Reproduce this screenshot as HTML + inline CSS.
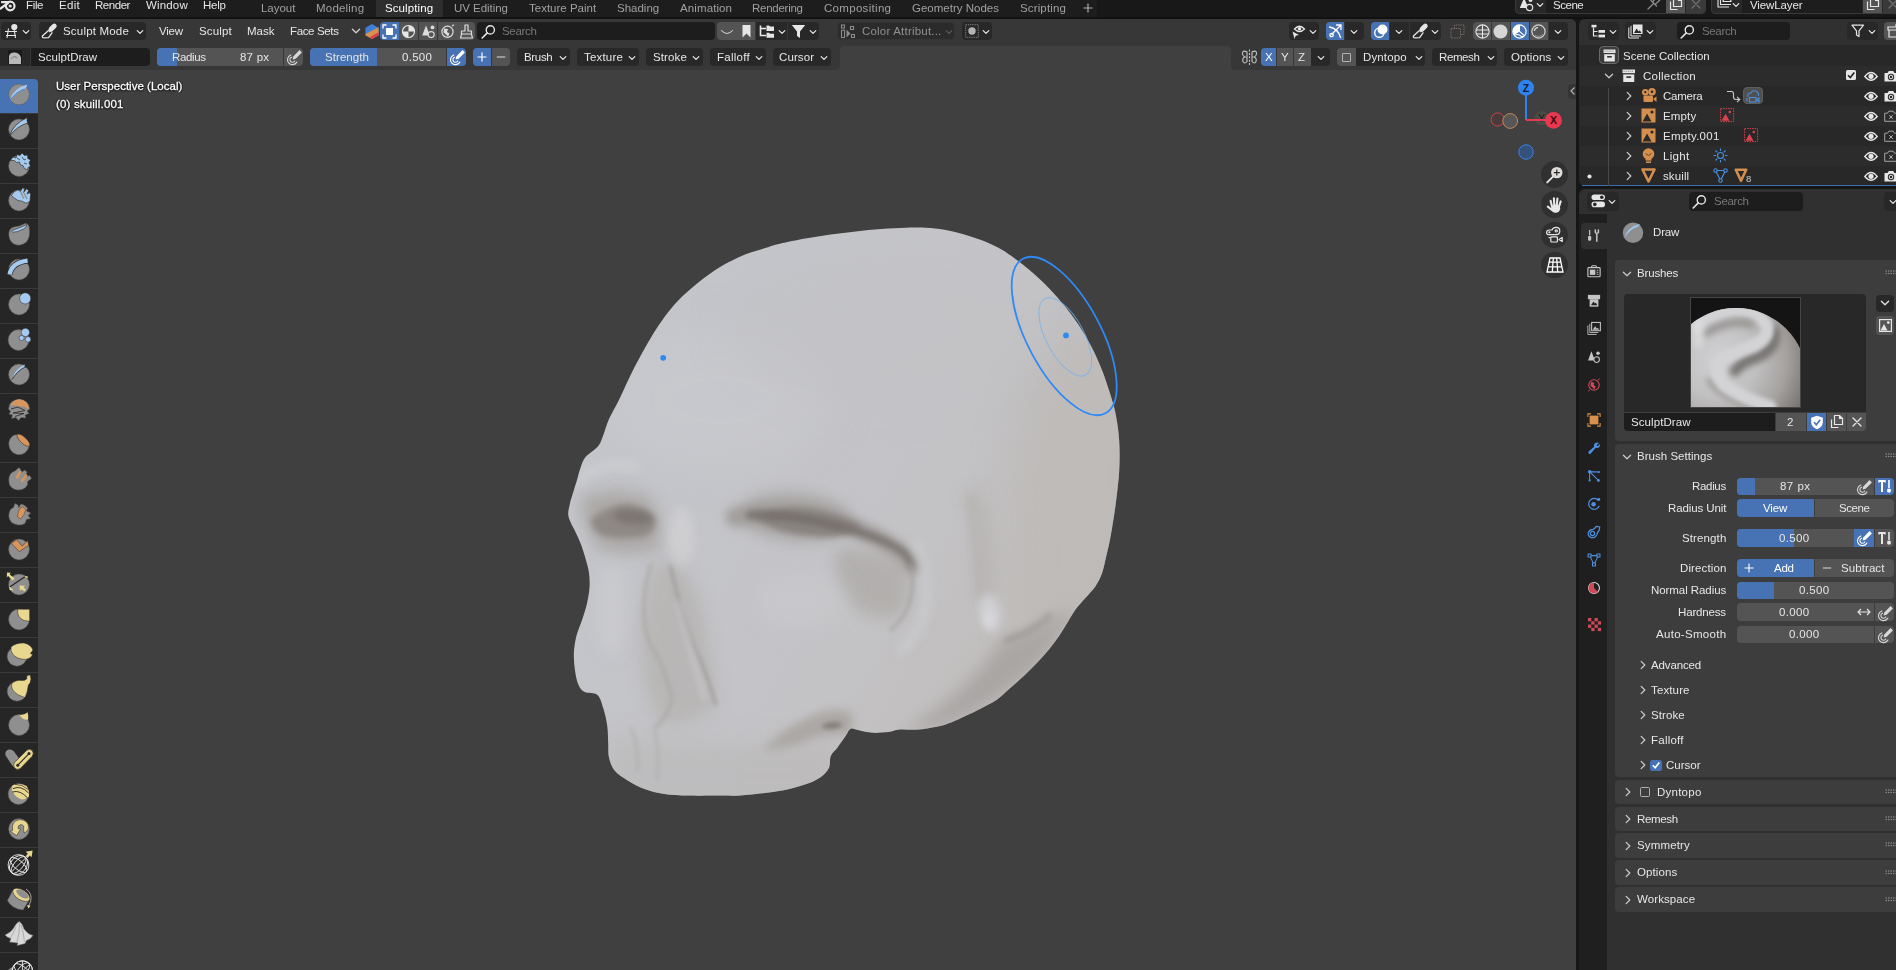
<!DOCTYPE html>
<html lang="en"><head><meta charset="utf-8"><title>Blender</title>
<style>
html,body{margin:0;padding:0}
body{width:1896px;height:970px;overflow:hidden;position:relative;background:#161616;
 font-family:"Liberation Sans",sans-serif;font-size:11.5px;color:#e6e6e6;-webkit-font-smoothing:antialiased}
div,span,svg{position:absolute;box-sizing:border-box}
.t{white-space:pre;line-height:16px;height:16px;will-change:transform}
svg{overflow:visible}
</style></head>
<body>
<div style="left:0.0px;top:19.0px;width:1576.0px;height:951.0px;background:#404040;border-radius:0 6px 0 0;"></div>
<svg style="left:540px;top:200px" width="620" height="620" viewBox="540 200 620 620"><defs><clipPath id="skc"><path d="M568.2 514.0C568.1 511.0 569.0 507.8 569.8 504.2C570.6 500.6 571.9 496.7 573.1 492.6C574.3 488.5 576.0 483.5 577.2 479.4C578.4 475.3 579.1 471.6 580.5 467.9C581.9 464.2 582.6 460.7 585.5 457.1C588.4 453.5 595.0 449.8 597.9 446.4C600.8 443.0 601.0 440.9 602.8 436.5C604.6 432.1 606.1 425.8 608.6 420.0C611.1 414.2 614.7 408.7 618.0 402.0C621.3 395.3 625.2 386.4 628.3 380.0C631.4 373.6 633.5 369.4 636.5 363.6C639.5 357.8 643.1 351.2 646.4 345.4C649.7 339.6 652.7 334.4 656.3 328.9C659.9 323.4 663.8 317.6 667.9 312.4C672.0 307.2 676.4 302.3 681.1 297.6C685.8 292.9 690.7 288.7 695.9 284.4C701.1 280.1 706.9 275.7 712.4 272.0C717.9 268.3 723.1 265.1 728.9 262.1C734.7 259.1 741.0 256.1 747.1 253.8C753.2 251.5 759.7 249.8 765.2 248.1C770.7 246.4 773.3 245.4 780.0 243.8C786.7 242.2 796.9 240.2 805.3 238.6C813.7 237.0 822.2 235.6 830.6 234.4C839.0 233.2 847.5 232.3 855.9 231.4C864.3 230.5 872.8 229.7 881.3 229.1C889.8 228.5 899.2 228.0 906.6 227.8C914.0 227.6 919.3 227.5 925.6 227.8C931.9 228.1 938.3 228.6 944.6 229.7C950.9 230.8 957.2 232.4 963.5 234.2C969.8 236.0 976.2 238.0 982.5 240.5C988.8 243.0 995.8 246.2 1001.5 249.4C1007.2 252.6 1011.2 255.9 1016.5 259.8C1021.8 263.7 1027.5 268.2 1033.0 273.0C1038.5 277.8 1044.0 282.9 1049.5 288.7C1055.0 294.5 1061.0 301.5 1066.0 307.7C1071.0 313.9 1075.1 319.5 1079.2 325.8C1083.3 332.1 1087.2 338.7 1090.8 345.6C1094.4 352.5 1098.0 360.5 1100.7 367.1C1103.5 373.7 1105.1 378.6 1107.3 385.2C1109.5 391.8 1112.2 400.2 1113.9 406.5C1115.6 412.8 1116.3 417.5 1117.2 423.0C1118.1 428.5 1118.7 434.0 1119.1 439.5C1119.5 445.0 1119.6 450.5 1119.6 456.0C1119.6 461.5 1119.4 467.0 1119.1 472.5C1118.8 478.0 1118.1 483.5 1117.5 489.0C1116.9 494.5 1116.2 500.0 1115.5 505.5C1114.8 511.0 1113.9 516.5 1113.0 522.0C1112.1 527.5 1111.3 532.8 1110.2 538.5C1109.1 544.2 1107.6 550.8 1106.2 556.5C1104.8 562.2 1103.9 568.0 1102.1 573.0C1100.3 578.0 1098.2 582.1 1095.5 586.2C1092.8 590.3 1088.9 593.9 1085.6 597.8C1082.3 601.6 1078.7 605.2 1075.7 609.3C1072.7 613.4 1070.2 618.1 1067.5 622.5C1064.8 626.9 1062.2 631.3 1059.2 635.7C1056.2 640.1 1052.9 644.5 1049.3 648.9C1045.7 653.3 1041.9 657.7 1037.8 662.1C1033.7 666.5 1029.3 670.9 1024.6 675.3C1019.9 679.7 1014.4 684.4 1009.7 688.5C1005.0 692.6 1001.5 696.6 996.5 700.0C991.5 703.4 984.6 706.6 980.0 709.0C975.4 711.4 974.4 711.9 968.7 714.5C963.0 717.1 953.9 721.9 945.6 724.4C937.4 726.9 926.8 728.5 919.2 729.4C911.6 730.2 905.1 729.1 900.0 729.5C894.9 729.9 893.2 731.5 888.5 732.0C883.8 732.5 877.0 733.1 872.0 732.8C867.0 732.5 862.4 731.0 858.8 730.3C855.2 729.6 852.8 727.7 850.6 728.7C848.4 729.7 847.8 732.9 845.6 736.1C843.4 739.3 839.9 744.4 837.4 747.7C834.9 751.0 832.2 752.6 830.8 755.9C829.4 759.2 830.5 764.2 829.1 767.5C827.7 770.8 825.8 773.1 822.5 775.7C819.2 778.3 814.8 780.9 809.3 783.1C803.8 785.3 796.9 787.2 789.5 788.9C782.1 790.5 773.0 791.9 764.8 793.0C756.5 794.1 747.1 795.1 740.0 795.5C732.9 795.9 730.5 795.5 722.0 795.5C713.5 795.5 698.6 795.8 689.0 795.5C679.4 795.2 671.7 795.0 664.3 793.9C656.9 792.8 650.5 791.1 644.5 788.9C638.5 786.7 633.0 783.7 628.0 780.7C623.0 777.7 618.0 774.6 614.8 770.8C611.6 766.9 610.1 762.3 609.0 757.6C607.9 752.9 608.5 747.9 608.2 742.7C607.9 737.5 608.1 732.0 607.3 726.2C606.5 720.4 604.9 713.2 603.2 708.0C601.6 702.8 600.5 697.5 597.4 694.9C594.3 692.2 587.9 693.9 584.7 692.1C581.5 690.3 579.8 687.8 578.1 683.9C576.5 680.0 575.5 674.2 574.8 669.0C574.1 663.8 573.6 658.0 573.9 652.5C574.2 647.0 575.0 641.5 576.4 636.0C577.8 630.5 580.4 625.0 582.2 619.5C584.0 614.0 585.9 608.5 587.1 603.0C588.3 597.5 589.3 591.7 589.6 586.5C589.9 581.3 589.5 576.4 588.8 571.8C588.1 567.1 586.7 563.0 585.5 558.6C584.3 554.2 582.9 549.5 581.4 545.4C579.9 541.3 578.2 537.8 576.4 533.9C574.6 530.0 572.0 525.6 570.6 522.3C569.2 519.0 568.3 517.0 568.2 514.0Z"/></clipPath><filter id="b2" filterUnits="userSpaceOnUse" x="480" y="140" width="740" height="740"><feGaussianBlur stdDeviation="2"/></filter><filter id="b3" filterUnits="userSpaceOnUse" x="480" y="140" width="740" height="740"><feGaussianBlur stdDeviation="3"/></filter><filter id="b5" filterUnits="userSpaceOnUse" x="480" y="140" width="740" height="740"><feGaussianBlur stdDeviation="5"/></filter><filter id="b8" filterUnits="userSpaceOnUse" x="480" y="140" width="740" height="740"><feGaussianBlur stdDeviation="8"/></filter><filter id="b12" filterUnits="userSpaceOnUse" x="480" y="140" width="740" height="740"><feGaussianBlur stdDeviation="12"/></filter><filter id="b20" filterUnits="userSpaceOnUse" x="480" y="140" width="740" height="740"><feGaussianBlur stdDeviation="20"/></filter><filter id="b1" filterUnits="userSpaceOnUse" x="480" y="140" width="740" height="740"><feGaussianBlur stdDeviation="1.2"/></filter><linearGradient id="skg" gradientUnits="userSpaceOnUse" x1="600" y1="300" x2="1120" y2="600"><stop offset="0" stop-color="#c4c6cb"/><stop offset="0.55" stop-color="#c4c4c8"/><stop offset="1" stop-color="#c0bcb9"/></linearGradient></defs><path d="M568.2 514.0C568.1 511.0 569.0 507.8 569.8 504.2C570.6 500.6 571.9 496.7 573.1 492.6C574.3 488.5 576.0 483.5 577.2 479.4C578.4 475.3 579.1 471.6 580.5 467.9C581.9 464.2 582.6 460.7 585.5 457.1C588.4 453.5 595.0 449.8 597.9 446.4C600.8 443.0 601.0 440.9 602.8 436.5C604.6 432.1 606.1 425.8 608.6 420.0C611.1 414.2 614.7 408.7 618.0 402.0C621.3 395.3 625.2 386.4 628.3 380.0C631.4 373.6 633.5 369.4 636.5 363.6C639.5 357.8 643.1 351.2 646.4 345.4C649.7 339.6 652.7 334.4 656.3 328.9C659.9 323.4 663.8 317.6 667.9 312.4C672.0 307.2 676.4 302.3 681.1 297.6C685.8 292.9 690.7 288.7 695.9 284.4C701.1 280.1 706.9 275.7 712.4 272.0C717.9 268.3 723.1 265.1 728.9 262.1C734.7 259.1 741.0 256.1 747.1 253.8C753.2 251.5 759.7 249.8 765.2 248.1C770.7 246.4 773.3 245.4 780.0 243.8C786.7 242.2 796.9 240.2 805.3 238.6C813.7 237.0 822.2 235.6 830.6 234.4C839.0 233.2 847.5 232.3 855.9 231.4C864.3 230.5 872.8 229.7 881.3 229.1C889.8 228.5 899.2 228.0 906.6 227.8C914.0 227.6 919.3 227.5 925.6 227.8C931.9 228.1 938.3 228.6 944.6 229.7C950.9 230.8 957.2 232.4 963.5 234.2C969.8 236.0 976.2 238.0 982.5 240.5C988.8 243.0 995.8 246.2 1001.5 249.4C1007.2 252.6 1011.2 255.9 1016.5 259.8C1021.8 263.7 1027.5 268.2 1033.0 273.0C1038.5 277.8 1044.0 282.9 1049.5 288.7C1055.0 294.5 1061.0 301.5 1066.0 307.7C1071.0 313.9 1075.1 319.5 1079.2 325.8C1083.3 332.1 1087.2 338.7 1090.8 345.6C1094.4 352.5 1098.0 360.5 1100.7 367.1C1103.5 373.7 1105.1 378.6 1107.3 385.2C1109.5 391.8 1112.2 400.2 1113.9 406.5C1115.6 412.8 1116.3 417.5 1117.2 423.0C1118.1 428.5 1118.7 434.0 1119.1 439.5C1119.5 445.0 1119.6 450.5 1119.6 456.0C1119.6 461.5 1119.4 467.0 1119.1 472.5C1118.8 478.0 1118.1 483.5 1117.5 489.0C1116.9 494.5 1116.2 500.0 1115.5 505.5C1114.8 511.0 1113.9 516.5 1113.0 522.0C1112.1 527.5 1111.3 532.8 1110.2 538.5C1109.1 544.2 1107.6 550.8 1106.2 556.5C1104.8 562.2 1103.9 568.0 1102.1 573.0C1100.3 578.0 1098.2 582.1 1095.5 586.2C1092.8 590.3 1088.9 593.9 1085.6 597.8C1082.3 601.6 1078.7 605.2 1075.7 609.3C1072.7 613.4 1070.2 618.1 1067.5 622.5C1064.8 626.9 1062.2 631.3 1059.2 635.7C1056.2 640.1 1052.9 644.5 1049.3 648.9C1045.7 653.3 1041.9 657.7 1037.8 662.1C1033.7 666.5 1029.3 670.9 1024.6 675.3C1019.9 679.7 1014.4 684.4 1009.7 688.5C1005.0 692.6 1001.5 696.6 996.5 700.0C991.5 703.4 984.6 706.6 980.0 709.0C975.4 711.4 974.4 711.9 968.7 714.5C963.0 717.1 953.9 721.9 945.6 724.4C937.4 726.9 926.8 728.5 919.2 729.4C911.6 730.2 905.1 729.1 900.0 729.5C894.9 729.9 893.2 731.5 888.5 732.0C883.8 732.5 877.0 733.1 872.0 732.8C867.0 732.5 862.4 731.0 858.8 730.3C855.2 729.6 852.8 727.7 850.6 728.7C848.4 729.7 847.8 732.9 845.6 736.1C843.4 739.3 839.9 744.4 837.4 747.7C834.9 751.0 832.2 752.6 830.8 755.9C829.4 759.2 830.5 764.2 829.1 767.5C827.7 770.8 825.8 773.1 822.5 775.7C819.2 778.3 814.8 780.9 809.3 783.1C803.8 785.3 796.9 787.2 789.5 788.9C782.1 790.5 773.0 791.9 764.8 793.0C756.5 794.1 747.1 795.1 740.0 795.5C732.9 795.9 730.5 795.5 722.0 795.5C713.5 795.5 698.6 795.8 689.0 795.5C679.4 795.2 671.7 795.0 664.3 793.9C656.9 792.8 650.5 791.1 644.5 788.9C638.5 786.7 633.0 783.7 628.0 780.7C623.0 777.7 618.0 774.6 614.8 770.8C611.6 766.9 610.1 762.3 609.0 757.6C607.9 752.9 608.5 747.9 608.2 742.7C607.9 737.5 608.1 732.0 607.3 726.2C606.5 720.4 604.9 713.2 603.2 708.0C601.6 702.8 600.5 697.5 597.4 694.9C594.3 692.2 587.9 693.9 584.7 692.1C581.5 690.3 579.8 687.8 578.1 683.9C576.5 680.0 575.5 674.2 574.8 669.0C574.1 663.8 573.6 658.0 573.9 652.5C574.2 647.0 575.0 641.5 576.4 636.0C577.8 630.5 580.4 625.0 582.2 619.5C584.0 614.0 585.9 608.5 587.1 603.0C588.3 597.5 589.3 591.7 589.6 586.5C589.9 581.3 589.5 576.4 588.8 571.8C588.1 567.1 586.7 563.0 585.5 558.6C584.3 554.2 582.9 549.5 581.4 545.4C579.9 541.3 578.2 537.8 576.4 533.9C574.6 530.0 572.0 525.6 570.6 522.3C569.2 519.0 568.3 517.0 568.2 514.0Z" fill="url(#skg)"/><g clip-path="url(#skc)"><ellipse cx="1085" cy="520" rx="75" ry="190" fill="#bcb8b4" opacity="0.55" filter="url(#b20)"/><ellipse cx="720" cy="400" rx="110" ry="70" fill="#cacbcf" opacity="0.55" filter="url(#b20)"/><ellipse cx="880" cy="330" rx="150" ry="70" fill="#c2c2c5" opacity="0.5" filter="url(#b20)"/><path d="M605 735 L835 745 L835 810 L605 810 Z" fill="#b9b7b6" opacity="0.55" filter="url(#b12)"/><path d="M576 486 Q598 456 640 468" fill="none" stroke="#d0d0d4" stroke-width="9" opacity="0.7" filter="url(#b5)"/><path d="M580 498 Q610 484 648 496 Q664 516 660 548 Q630 558 598 548 Q584 530 580 498Z" fill="#aaa7a5" opacity="0.95" filter="url(#b8)"/><path d="M591 519 Q606 506 626 504 Q649 506 656 520 Q656 531 646 536 Q620 541 601 535 Q591 529 591 519Z" fill="#8f8985" filter="url(#b3)"/><ellipse cx="633" cy="517" rx="19" ry="7" transform="rotate(6 633 517)" fill="#79736e" opacity="0.85" filter="url(#b3)"/><ellipse cx="681" cy="538" rx="13" ry="30" fill="#d0d0d3" opacity="0.8" filter="url(#b5)"/><ellipse cx="796" cy="517" rx="56" ry="24" transform="rotate(4 796 517)" fill="#a9a6a4" filter="url(#b8)"/><path d="M735 517 Q775 510 805 514 Q836 520 868 534 Q896 547 911 566" fill="none" stroke="#a29f9d" stroke-width="20" stroke-linecap="round" filter="url(#b5)"/><path d="M752 516 Q775 506 806 508 Q836 512 862 526 Q845 540 812 536 Q775 534 752 516Z" fill="#88837f" filter="url(#b3)"/><path d="M750 515 Q780 514 807 519 Q838 525 864 533.5 Q890 543 902 552 Q909 558 911 566" fill="none" stroke="#79736f" stroke-width="8" stroke-linecap="round" filter="url(#b3)"/><path d="M770 516 Q800 516 838 527" fill="none" stroke="#77716d" stroke-width="5" stroke-linecap="round" opacity="0.8" filter="url(#b2)"/><path d="M836 548 Q880 546 906 566 Q914 592 903 612 Q880 626 852 606 Q830 580 836 548Z" fill="#b1aeac" opacity="0.9" filter="url(#b8)"/><path d="M910 564 Q916 584 908 607 Q901 622 890 631" fill="none" stroke="#a5a2a0" stroke-width="2.5" filter="url(#b2)"/><path d="M916 540 Q932 580 924 615 Q915 640 898 652" fill="none" stroke="#cdcdd0" stroke-width="9" opacity="0.7" filter="url(#b5)"/><ellipse cx="800" cy="600" rx="45" ry="25" fill="#cbcbce" opacity="0.6" filter="url(#b12)"/><path d="M656 560 Q688 562 700 600 Q714 656 717 706 Q692 726 662 724 Q640 692 641 642 Q640 600 656 560Z" fill="#b4b1ae" opacity="0.7" filter="url(#b8)"/><path d="M670 565 Q678 602 694 647 Q708 676 716 706" fill="none" stroke="#9a9693" stroke-width="2.4" filter="url(#b2)"/><path d="M651 563 Q638 610 649 642 Q666 668 672 700 Q668 716 655 728" fill="none" stroke="#aaa7a4" stroke-width="2.6" filter="url(#b2)"/><path d="M678 600 Q690 650 705 700" fill="none" stroke="#cfcfd2" stroke-width="5" opacity="0.6" filter="url(#b3)"/><ellipse cx="612" cy="610" rx="16" ry="45" fill="#cdcdd0" opacity="0.6" filter="url(#b8)"/><path d="M763 750 Q788 724 820 713 Q840 706 853 715 L851 735 Q826 732 806 741 Q786 750 763 750Z" fill="#aba7a4" filter="url(#b5)"/><ellipse cx="832" cy="725.5" rx="10" ry="3.6" transform="rotate(-6 832 725.5)" fill="#878079" filter="url(#b2)"/><path d="M631 728 Q640 750 637 772 M654 728 Q660 755 657 780" fill="none" stroke="#b0adab" stroke-width="2" filter="url(#b2)"/><path d="M972 492 Q990 540 984 600" fill="none" stroke="#b5b2af" stroke-width="16" opacity="0.8" filter="url(#b8)"/><path d="M969 496 Q976 550 980 600" fill="none" stroke="#adaaa7" stroke-width="2.5" opacity="0.7" filter="url(#b3)"/><ellipse cx="990" cy="613" rx="10" ry="19" transform="rotate(-10 990 613)" fill="#d4d4d9" opacity="0.85" filter="url(#b5)"/><ellipse cx="989" cy="620" rx="5" ry="8" fill="#dadadf" opacity="0.8" filter="url(#b3)"/><path d="M1003 640 Q1030 636 1056 616 L1075 612 L1036 668 L992 702 L946 726 L900 733 Q960 700 1003 640Z" fill="#a9a6a4" filter="url(#b8)"/><path d="M1004 641 Q1034 632 1051 614" fill="none" stroke="#96928f" stroke-width="4" filter="url(#b3)"/></g><g fill="none" transform="rotate(61.9 1064.2 336)"><ellipse cx="1064.2" cy="336" rx="87.5" ry="36.8" stroke="#2f8af5" stroke-width="1.8"/><ellipse cx="1065.5" cy="335.5" rx="43.2" ry="19" stroke="#6fb0f5" stroke-width="0.9" opacity="0.8"/></g><circle cx="1066" cy="335.4" r="2.9" fill="#2f8af0"/><circle cx="663.2" cy="357.8" r="2.9" fill="#2f8af0"/></svg>
<div style="left:0.0px;top:19.0px;width:1576.0px;height:51.0px;background:#373737;border-radius:0 6px 0 0;"></div>
<div style="left:840.0px;top:46.0px;width:391.4px;height:24.5px;background:#404040;border-radius:4px 4px 0 0;"></div>
<div style="left:830.0px;top:60.0px;width:10.0px;height:10.5px;background:#404040;border-radius:0px;"></div>
<div style="left:828.0px;top:56.0px;width:12.0px;height:14.0px;background:#373737;border-radius:0 0 4px 0;"></div>
<div style="left:1231.4px;top:60.0px;width:8.6px;height:10.5px;background:#404040;border-radius:0px;"></div>
<div style="left:1231.4px;top:56.0px;width:12.6px;height:14.0px;background:#373737;border-radius:0 0 0 4px;"></div>
<div style="left:1.0px;top:22.0px;width:30.0px;height:18.0px;background:#282828;border-radius:4px;"></div>
<svg style="left:4.0px;top:23.0px;" width="16" height="16" viewBox="0 0 16 16"><g fill="none" stroke="#e6e6e6" stroke-width="1.1"><path d="M1 8.5 H13 M2 12.5 H12 M4.5 5.5 L3 15 M10 5.5 L11.5 15"/></g><circle cx="10.3" cy="4" r="3.1" fill="#e6e6e6"/></svg>
<svg style="left:19.6px;top:25.5px;" width="12" height="12" viewBox="0 0 12 12"><path d="M3.2 4.6 L6 7.4 L8.8 4.6" fill="none" stroke="#e6e6e6" stroke-width="1.25" stroke-linecap="round" stroke-linejoin="round"/></svg>
<div style="left:38.5px;top:22.0px;width:107.5px;height:18.0px;background:#282828;border-radius:4px;"></div>
<svg style="left:41.2px;top:23.0px;" width="16" height="16" viewBox="0 0 16 16"><path d="M7.2 7.7 L1.4 13 Q1 14.8 2.8 14.8 L7.6 14.6 L11 9.8" fill="none" stroke="#e6e6e6" stroke-width="1.3" stroke-linejoin="round" stroke-linecap="round"/><path d="M7.9 8.5 L10 6.4" stroke="#e6e6e6" stroke-width="2.6"/><path d="M10 6.3 L13.3 3" stroke="#e6e6e6" stroke-width="4.8" stroke-linecap="round"/></svg>
<span class="t" style="left:62.8px;top:23.13px;font-size:11.5px;letter-spacing:0.19px;color:#e6e6e6;">Sculpt Mode</span><svg style="left:134.0px;top:25.5px;" width="12" height="12" viewBox="0 0 12 12"><path d="M3.2 4.6 L6 7.4 L8.8 4.6" fill="none" stroke="#e6e6e6" stroke-width="1.25" stroke-linecap="round" stroke-linejoin="round"/></svg>
<span class="t" style="left:159.0px;top:23.13px;font-size:11.5px;letter-spacing:-0.21px;color:#e6e6e6;">View</span><span class="t" style="left:198.7px;top:23.13px;font-size:11.5px;letter-spacing:0.17px;color:#e6e6e6;">Sculpt</span><span class="t" style="left:246.8px;top:23.13px;font-size:11.5px;color:#e6e6e6;">Mask</span><span class="t" style="left:289.8px;top:23.13px;font-size:11.5px;letter-spacing:-0.36px;color:#e6e6e6;">Face Sets</span><svg style="left:349.7px;top:25.2px;" width="12" height="12" viewBox="0 0 12 12"><path d="M2.4 4.2 L6 7.8 L9.6 4.2" fill="none" stroke="#d0d0d0" stroke-width="1.25" stroke-linecap="round" stroke-linejoin="round"/></svg>
<svg style="left:365.0px;top:24.0px;" width="14" height="15" viewBox="0 0 14 15"><path d="M7 0 L13.6 3.8 V11.2 L7 15 L0.4 11.2 V3.8 Z" fill="#3f7fd6"/><path d="M13.6 3.2 V11.2 L7 15 L0.4 11.2 V9.9 Z" fill="#d7914a"/><path d="M13.6 8.2 V11.2 L7 15 L4.6 13.6 Z" fill="#e0384a"/></svg>
<div style="left:380.0px;top:22.0px;width:18.7px;height:18.0px;background:#4772b3;border-radius:4px 0 0 4px;"></div>
<div style="left:399.3px;top:22.0px;width:18.7px;height:18.0px;background:#545454;border-radius:0;"></div>
<div style="left:418.6px;top:22.0px;width:18.7px;height:18.0px;background:#545454;border-radius:0;"></div>
<div style="left:437.9px;top:22.0px;width:18.7px;height:18.0px;background:#545454;border-radius:0;"></div>
<div style="left:457.2px;top:22.0px;width:17.4px;height:18.0px;background:#545454;border-radius:0 4px 4px 0;"></div>
<svg style="left:382.0px;top:23.5px;" width="15" height="15" viewBox="0 0 15 15"><rect x="4" y="4" width="7" height="7" fill="#fff"/><path d="M1 4.5 V1 H4.5 M10.5 1 H14 V4.5 M14 10.5 V14 H10.5 M4.5 14 H1 V10.5" fill="none" stroke="#fff" stroke-width="1.3"/></svg>
<svg style="left:401.3px;top:23.5px;" width="15" height="15" viewBox="0 0 15 15"><circle cx="7.5" cy="7.5" r="6" fill="none" stroke="#e6e6e6" stroke-width="1.2"/><path d="M7.5 1.5 A6 6 0 0 1 13.5 7.5 H7.5 Z M7.5 13.5 A6 6 0 0 1 1.5 7.5 H7.5 Z" fill="#e6e6e6"/></svg>
<svg style="left:420.6px;top:23.5px;" width="15" height="15" viewBox="0 0 15 15"><path d="M5 1.5 L9 11.5 H1.2 Z" fill="#dcdcdc"/><circle cx="11.5" cy="3.4" r="1.9" fill="#dcdcdc"/><circle cx="10.2" cy="10.6" r="3" fill="#545454" stroke="#dcdcdc" stroke-width="1.1"/></svg>
<svg style="left:439.9px;top:23.5px;" width="15" height="15" viewBox="0 0 15 15"><circle cx="7.5" cy="7.8" r="5.6" fill="none" stroke="#dcdcdc" stroke-width="1.2"/><path d="M4 4.5 L8 5 L7 8 L9.5 9.5 L8 12.5 L5.5 10 L3.5 8.5 Z" fill="#dcdcdc"/><path d="M12 2 L14 0.8" stroke="#dcdcdc" stroke-width="1.1"/></svg>
<svg style="left:459.2px;top:23.5px;" width="15" height="15" viewBox="0 0 15 15"><path d="M6 1 H9 V7 H12.5 V10 H2.5 V7 H6 Z M2.5 10.5 L1.5 14 H13.5 L12.5 10.5" fill="none" stroke="#dcdcdc" stroke-width="1.2" stroke-linejoin="round"/></svg>
<div style="left:477.0px;top:22.0px;width:238.0px;height:18.0px;background:#1d1d1d;border-radius:4px;"></div>
<svg style="left:481.0px;top:23.5px;" width="16" height="16" viewBox="0 0 16 16"><circle cx="9.3" cy="5.9" r="4.1" fill="none" stroke="#e6e6e6" stroke-width="1.4"/><path d="M6.3 8.9 L1.2 14" stroke="#e6e6e6" stroke-width="1.6" stroke-linecap="round"/></svg>
<span class="t" style="left:501.7px;top:23.13px;font-size:11.5px;letter-spacing:-0.31px;color:#787878;">Search</span><div style="left:717.0px;top:22.0px;width:18.7px;height:18.0px;background:#545454;border-radius:4px 0 0 4px;"></div>
<svg style="left:719.5px;top:24.0px;" width="14" height="14" viewBox="0 0 14 14"><path d="M1.5 6.5 Q7 12.5 12.5 6.5" fill="none" stroke="#d0d0d0" stroke-width="1.1" stroke-linecap="round"/></svg>
<div style="left:736.3px;top:22.0px;width:18.9px;height:18.0px;background:#545454;border-radius:0px;"></div>
<svg style="left:739.5px;top:23.5px;" width="14" height="15" viewBox="0 0 14 15"><path d="M2.5 1 H10.5 V13.5 L6.5 9.5 L2.5 13.5 Z" fill="#e6e6e6"/></svg>
<div style="left:755.8px;top:22.0px;width:31.4px;height:18.0px;background:#282828;border-radius:0px;"></div>
<svg style="left:758.5px;top:23.5px;" width="16" height="15" viewBox="0 0 16 15"><path d="M1.5 1.5 V11.5 H7" fill="none" stroke="#e6e6e6" stroke-width="1.6"/><path d="M1.5 4.5 H7" stroke="#e6e6e6" stroke-width="1.6"/><path d="M7.5 1.5 H10 L11 2.5 H15 V7 H7.5 Z M7.5 8.8 H10 L11 9.8 H15 V13.8 H7.5 Z" fill="#e6e6e6"/></svg>
<svg style="left:775.5px;top:25.5px;" width="12" height="12" viewBox="0 0 12 12"><path d="M3.2 4.6 L6 7.4 L8.8 4.6" fill="none" stroke="#e6e6e6" stroke-width="1.25" stroke-linecap="round" stroke-linejoin="round"/></svg>
<div style="left:787.8px;top:22.0px;width:31.2px;height:18.0px;background:#282828;border-radius:0 4px 4px 0;"></div>
<svg style="left:790.5px;top:23.5px;" width="16" height="15" viewBox="0 0 16 15"><path d="M0.8 1 H14.2 L9 7.5 V14 L6 12 V7.5 Z" fill="#e6e6e6"/></svg>
<svg style="left:807.0px;top:25.5px;" width="12" height="12" viewBox="0 0 12 12"><path d="M3.2 4.6 L6 7.4 L8.8 4.6" fill="none" stroke="#e6e6e6" stroke-width="1.25" stroke-linecap="round" stroke-linejoin="round"/></svg>
<div style="left:836.9px;top:22.0px;width:118.1px;height:18.0px;background:#2b2b2b;border-radius:4px;border:1px solid #343434;"></div>
<svg style="left:839.5px;top:23.5px;" width="16" height="15" viewBox="0 0 16 15"><g fill="none" stroke="#8a8a8a" stroke-width="1.1"><rect x="1.5" y="1" width="3" height="3"/><rect x="1.5" y="6.2" width="3" height="7.3"/><rect x="10.5" y="2.5" width="3" height="3"/><rect x="11.5" y="10.5" width="3" height="3"/></g><path d="M6.5 5.5 L10.5 9.5 L6.5 13.5 Z" fill="#8a8a8a"/></svg>
<span class="t" style="left:861.7px;top:23.13px;font-size:11.5px;letter-spacing:0.20px;color:#8f8f8f;">Color Attribut...</span><svg style="left:943.0px;top:25.5px;" width="12" height="12" viewBox="0 0 12 12"><path d="M3.2 4.6 L6 7.4 L8.8 4.6" fill="none" stroke="#5a5a5a" stroke-width="1.25" stroke-linecap="round" stroke-linejoin="round"/></svg>
<div style="left:962.0px;top:22.0px;width:30.0px;height:18.0px;background:#282828;border-radius:4px;"></div>
<svg style="left:965.0px;top:24.0px;" width="14" height="14" viewBox="0 0 14 14"><rect x="0.7" y="0.7" width="12.6" height="12.6" fill="none" stroke="#9a9a9a" stroke-width="0.8" stroke-dasharray="1.2 1"/><circle cx="7" cy="7" r="3.7" fill="#b4b4b4"/></svg>
<svg style="left:980.0px;top:25.8px;" width="12" height="12" viewBox="0 0 12 12"><path d="M3.2 4.6 L6 7.4 L8.8 4.6" fill="none" stroke="#e6e6e6" stroke-width="1.25" stroke-linecap="round" stroke-linejoin="round"/></svg>
<div style="left:1289.3px;top:22.0px;width:29.4px;height:18.0px;background:#282828;border-radius:4px;"></div>
<svg style="left:1291.0px;top:22.5px;" width="16" height="17" viewBox="0 0 16 17"><path d="M3.5 6 Q8.5 0.5 13.5 6 Q8.5 11 3.5 6 Z" fill="none" stroke="#e6e6e6" stroke-width="1.3"/><circle cx="8.5" cy="5.8" r="1.8" fill="#e6e6e6"/><path d="M1.5 8.5 L8 12 L4.7 12.8 L3.6 16 Z" fill="#e6e6e6"/></svg>
<svg style="left:1307.0px;top:25.8px;" width="12" height="12" viewBox="0 0 12 12"><path d="M3.2 4.6 L6 7.4 L8.8 4.6" fill="none" stroke="#e6e6e6" stroke-width="1.25" stroke-linecap="round" stroke-linejoin="round"/></svg>
<div style="left:1326.0px;top:22.0px;width:18.4px;height:18.0px;background:#4772b3;border-radius:4px 0 0 4px;"></div>
<svg style="left:1327.5px;top:23.0px;" width="16" height="16" viewBox="0 0 16 16"><g fill="none" stroke="#fff" stroke-width="1.3" stroke-linecap="round"><path d="M3.8 11.2 L12.5 2.5 M8.5 2 H13 V6.5"/><path d="M1.5 4 Q10 5.5 12.5 14.5"/><circle cx="3.6" cy="12" r="1.7"/></g></svg>
<div style="left:1345.0px;top:22.0px;width:19.0px;height:18.0px;background:#282828;border-radius:0 4px 4px 0;"></div>
<svg style="left:1348.3px;top:25.8px;" width="12" height="12" viewBox="0 0 12 12"><path d="M3.2 4.6 L6 7.4 L8.8 4.6" fill="none" stroke="#e6e6e6" stroke-width="1.25" stroke-linecap="round" stroke-linejoin="round"/></svg>
<div style="left:1371.0px;top:22.0px;width:18.0px;height:18.0px;background:#4772b3;border-radius:4px 0 0 4px;"></div>
<svg style="left:1372.5px;top:23.0px;" width="16" height="16" viewBox="0 0 16 16"><circle cx="9.5" cy="6.5" r="5" fill="#fff"/><circle cx="6.3" cy="9.7" r="4.6" fill="none" stroke="#fff" stroke-width="1.4"/></svg>
<div style="left:1389.6px;top:22.0px;width:19.4px;height:18.0px;background:#282828;border-radius:0px;"></div>
<svg style="left:1393.3px;top:25.8px;" width="12" height="12" viewBox="0 0 12 12"><path d="M3.2 4.6 L6 7.4 L8.8 4.6" fill="none" stroke="#e6e6e6" stroke-width="1.25" stroke-linecap="round" stroke-linejoin="round"/></svg>
<div style="left:1409.6px;top:22.0px;width:31.4px;height:18.0px;background:#282828;border-radius:0 4px 4px 0;"></div>
<svg style="left:1412.0px;top:23.0px;" width="16" height="16" viewBox="0 0 16 16"><path d="M7.2 7.7 L1.4 13 Q1 14.8 2.8 14.8 L7.6 14.6 L11 9.8" fill="none" stroke="#e6e6e6" stroke-width="1.3" stroke-linejoin="round" stroke-linecap="round"/><path d="M7.9 8.5 L10 6.4" stroke="#e6e6e6" stroke-width="2.6"/><path d="M10 6.3 L13.3 3" stroke="#e6e6e6" stroke-width="4.8" stroke-linecap="round"/></svg>
<svg style="left:1429.0px;top:25.8px;" width="12" height="12" viewBox="0 0 12 12"><path d="M3.2 4.6 L6 7.4 L8.8 4.6" fill="none" stroke="#e6e6e6" stroke-width="1.25" stroke-linecap="round" stroke-linejoin="round"/></svg>
<div style="left:1448.8px;top:22.0px;width:17.2px;height:18.0px;background:#373737;border-radius:4px;"></div>
<svg style="left:1450.3px;top:23.5px;" width="15" height="15" viewBox="0 0 15 15"><g fill="none" stroke="#7d6f6a" stroke-width="1" stroke-dasharray="1.4 1"><rect x="1" y="4.5" width="9.5" height="9.5"/><path d="M4.5 4.5 V1 H14 V10.5 H10.5"/></g></svg>
<div style="left:1472.7px;top:22.0px;width:18.6px;height:18.0px;background:#545454;border-radius:4px 0 0 4px;"></div>
<div style="left:1491.9px;top:22.0px;width:18.5px;height:18.0px;background:#545454;border-radius:0;"></div>
<div style="left:1511.0px;top:22.0px;width:18.0px;height:18.0px;background:#4772b3;border-radius:0;"></div>
<div style="left:1529.6px;top:22.0px;width:18.7px;height:18.0px;background:#545454;border-radius:0;"></div>
<div style="left:1548.9px;top:22.0px;width:18.7px;height:18.0px;background:#282828;border-radius:0 4px 4px 0;"></div>
<svg style="left:1474.6px;top:23.5px;" width="15" height="15" viewBox="0 0 15 15"><g fill="none" stroke="#e6e6e6" stroke-width="1.1"><circle cx="7.5" cy="7.5" r="6.6"/><path d="M7.5 0.9 V14.1 M1 6 H14 M1.4 10 H13.6"/></g></svg>
<svg style="left:1493.3px;top:23.5px;" width="15" height="15" viewBox="0 0 15 15"><circle cx="7.5" cy="7.5" r="7" fill="#d6d6d6"/></svg>
<svg style="left:1512.3px;top:23.5px;" width="15" height="15" viewBox="0 0 15 15"><circle cx="7.5" cy="7.5" r="6.6" fill="none" stroke="#fff" stroke-width="1.2"/><path d="M7.5 7.5 L7.5 1 A6.5 6.5 0 0 0 2.2 11.3 Z" fill="#fff"/><path d="M7.5 1 V7.5 L12.4 11.6" fill="none" stroke="#fff" stroke-width="1.1"/><path d="M3 11.2 Q6 9.6 8.2 11.6 Q9.6 13 11.4 12.4" fill="none" stroke="#fff" stroke-width="1.2"/></svg>
<svg style="left:1531.3px;top:23.5px;" width="15" height="15" viewBox="0 0 15 15"><circle cx="7.5" cy="7.5" r="6.6" fill="none" stroke="#d6d6d6" stroke-width="1.2"/><path d="M3.3 7 A4.3 4.3 0 0 1 7 3.3" fill="none" stroke="#d6d6d6" stroke-width="1.2"/><path d="M4 11 A5.2 5.2 0 0 0 12 10" fill="none" stroke="#9a9a9a" stroke-width="1"/></svg>
<svg style="left:1551.8px;top:25.8px;" width="12" height="12" viewBox="0 0 12 12"><path d="M3.2 4.6 L6 7.4 L8.8 4.6" fill="none" stroke="#e6e6e6" stroke-width="1.25" stroke-linecap="round" stroke-linejoin="round"/></svg>
<div style="left:0.0px;top:48.0px;width:30.0px;height:18.0px;background:#282828;border-radius:0 0 0 0;"></div>
<svg style="left:8.0px;top:50.0px;" width="14" height="14" viewBox="0 0 14 14"><rect x="0" y="0" width="14" height="14" fill="#1a1a1a"/><path d="M1 14 V6 Q2 2 7 2.5 Q12 3 13 8 V14 Z" fill="#b9b9b9"/><path d="M3 9 Q6 5 9 8" fill="none" stroke="#8a8a8a" stroke-width="1.2"/></svg>
<div style="left:31.0px;top:48.0px;width:119.0px;height:18.0px;background:#1d1d1d;border-radius:0 4px 4px 0;"></div>
<span class="t" style="left:38.0px;top:49.23px;font-size:11.5px;letter-spacing:0.03px;color:#e6e6e6;">SculptDraw</span><div style="left:157.0px;top:48.0px;width:126.0px;height:18.0px;background:#545454;border-radius:4px 0 0 4px;overflow:hidden;"><div style="left:0.0px;top:0.0px;width:20.0px;height:18.0px;background:#4772b3;"></div>
</div><span class="t" style="left:171.7px;top:49.23px;font-size:11.5px;letter-spacing:-0.36px;color:#e6e6e6;">Radius</span><span class="t" style="left:240.0px;top:49.23px;font-size:11.5px;letter-spacing:0.22px;color:#e6e6e6;">87 px</span><div style="left:283.6px;top:48.0px;width:19.4px;height:18.0px;background:#545454;border-radius:0 4px 4px 0;"></div>
<svg style="left:285.5px;top:49.2px;" width="16" height="16" viewBox="0 0 16 16"><g fill="none" stroke="#d8d8d8" stroke-width="1.1" stroke-linecap="round"><path d="M4.79 5.9 A5 5 0 1 0 10.83 13.1"/><path d="M5.61 8.16 A2.6 2.6 0 1 0 8.75 11.9"/></g><path d="M6.6 10.4 L7.3 7.4 L13.6 1.1 L15.9 3.4 L9.6 9.7 Z" fill="#d8d8d8"/></svg>
<div style="left:309.8px;top:48.0px;width:136.6px;height:18.0px;background:#545454;border-radius:4px 0 0 4px;overflow:hidden;"><div style="left:0.0px;top:0.0px;width:67.2px;height:18.0px;background:#4772b3;"></div>
</div><span class="t" style="left:324.8px;top:49.23px;font-size:11.5px;letter-spacing:0.06px;color:#e6e6e6;">Strength</span><span class="t" style="left:402.1px;top:49.23px;font-size:11.5px;letter-spacing:0.28px;color:#e6e6e6;">0.500</span><div style="left:447.0px;top:48.0px;width:19.0px;height:18.0px;background:#4772b3;border-radius:0 4px 4px 0;"></div>
<svg style="left:448.7px;top:49.2px;" width="16" height="16" viewBox="0 0 16 16"><g fill="none" stroke="#fff" stroke-width="1.1" stroke-linecap="round"><path d="M4.79 5.9 A5 5 0 1 0 10.83 13.1"/><path d="M5.61 8.16 A2.6 2.6 0 1 0 8.75 11.9"/></g><path d="M6.6 10.4 L7.3 7.4 L13.6 1.1 L15.9 3.4 L9.6 9.7 Z" fill="#fff"/></svg>
<div style="left:473.0px;top:48.0px;width:18.0px;height:18.0px;background:#4772b3;border-radius:4px 0 0 4px;"></div>
<svg style="left:477.0px;top:52.0px;" width="10" height="10" viewBox="0 0 10 10"><path d="M5 0.5V9.5M0.5 5H9.5" stroke="#fff" stroke-width="1.2" fill="none"/></svg>
<div style="left:491.6px;top:48.0px;width:18.4px;height:18.0px;background:#545454;border-radius:0 4px 4px 0;"></div>
<svg style="left:496.0px;top:52.0px;" width="10" height="10" viewBox="0 0 10 10"><path d="M0.8 5H9.2" stroke="#c8c8c8" stroke-width="1.2" fill="none"/></svg>
<div style="left:517.0px;top:48.0px;width:53.0px;height:18.0px;background:#282828;border-radius:4px;"></div>
<span class="t" style="left:524.0px;top:49.23px;font-size:11.5px;letter-spacing:-0.34px;color:#e6e6e6;">Brush</span><svg style="left:556.5px;top:51.8px;" width="12" height="12" viewBox="0 0 12 12"><path d="M3.2 4.6 L6 7.4 L8.8 4.6" fill="none" stroke="#e6e6e6" stroke-width="1.25" stroke-linecap="round" stroke-linejoin="round"/></svg>
<div style="left:577.0px;top:48.0px;width:62.0px;height:18.0px;background:#282828;border-radius:4px;"></div>
<span class="t" style="left:584.0px;top:49.23px;font-size:11.5px;letter-spacing:0.18px;color:#e6e6e6;">Texture</span><svg style="left:625.5px;top:51.8px;" width="12" height="12" viewBox="0 0 12 12"><path d="M3.2 4.6 L6 7.4 L8.8 4.6" fill="none" stroke="#e6e6e6" stroke-width="1.25" stroke-linecap="round" stroke-linejoin="round"/></svg>
<div style="left:646.0px;top:48.0px;width:57.0px;height:18.0px;background:#282828;border-radius:4px;"></div>
<span class="t" style="left:652.8px;top:49.23px;font-size:11.5px;letter-spacing:0.11px;color:#e6e6e6;">Stroke</span><svg style="left:689.5px;top:51.8px;" width="12" height="12" viewBox="0 0 12 12"><path d="M3.2 4.6 L6 7.4 L8.8 4.6" fill="none" stroke="#e6e6e6" stroke-width="1.25" stroke-linecap="round" stroke-linejoin="round"/></svg>
<div style="left:710.0px;top:48.0px;width:56.0px;height:18.0px;background:#282828;border-radius:4px;"></div>
<span class="t" style="left:716.8px;top:49.23px;font-size:11.5px;letter-spacing:0.25px;color:#e6e6e6;">Falloff</span><svg style="left:752.5px;top:51.8px;" width="12" height="12" viewBox="0 0 12 12"><path d="M3.2 4.6 L6 7.4 L8.8 4.6" fill="none" stroke="#e6e6e6" stroke-width="1.25" stroke-linecap="round" stroke-linejoin="round"/></svg>
<div style="left:773.0px;top:48.0px;width:58.0px;height:18.0px;background:#282828;border-radius:4px;"></div>
<span class="t" style="left:779.4px;top:49.23px;font-size:11.5px;letter-spacing:0.10px;color:#e6e6e6;">Cursor</span><svg style="left:817.5px;top:51.8px;" width="12" height="12" viewBox="0 0 12 12"><path d="M3.2 4.6 L6 7.4 L8.8 4.6" fill="none" stroke="#e6e6e6" stroke-width="1.25" stroke-linecap="round" stroke-linejoin="round"/></svg>
<svg style="left:1241.0px;top:49.0px;" width="17" height="17" viewBox="0 0 17 17"><g fill="none" stroke="#c8c8c8" stroke-width="1.1"><path d="M6 3 Q1 0.5 1.5 5 Q2 7.5 4 8 Q1 9 2 12.5 Q3.5 15.5 6 12.5 Z"/><path d="M11 3 Q16 0.5 15.5 5 Q15 7.5 13 8 Q16 9 15 12.5 Q13.5 15.5 11 12.5 Z"/><path d="M8.5 0.5 V16" stroke-dasharray="2 1.4"/></g></svg>
<div style="left:1261.2px;top:48.0px;width:15.2px;height:18.0px;background:#4772b3;border-radius:4px 0 0 4px;"></div>
<div style="left:1277.0px;top:48.0px;width:16.0px;height:18.0px;background:#545454;border-radius:0px;"></div>
<div style="left:1293.6px;top:48.0px;width:17.0px;height:18.0px;background:#545454;border-radius:0px;"></div>
<div style="left:1311.2px;top:48.0px;width:18.8px;height:18.0px;background:#282828;border-radius:0 4px 4px 0;"></div>
<span class="t" style="left:1264.7px;top:49.23px;font-size:11.5px;letter-spacing:-0.27px;color:#fff;">X</span><span class="t" style="left:1280.5px;top:49.23px;font-size:11.5px;letter-spacing:0.33px;color:#e6e6e6;">Y</span><span class="t" style="left:1297.8px;top:49.23px;font-size:11.5px;letter-spacing:0.17px;color:#e6e6e6;">Z</span><svg style="left:1314.5px;top:51.8px;" width="12" height="12" viewBox="0 0 12 12"><path d="M3.2 4.6 L6 7.4 L8.8 4.6" fill="none" stroke="#e6e6e6" stroke-width="1.25" stroke-linecap="round" stroke-linejoin="round"/></svg>
<div style="left:1336.8px;top:48.0px;width:18.8px;height:18.0px;background:#545454;border-radius:4px 0 0 4px;"></div>
<div style="left:1341.5px;top:52.5px;width:9.5px;height:9.5px;background:transparent;border-radius:1px;border:1px solid #b4b4b4;"></div>
<div style="left:1356.2px;top:48.0px;width:68.8px;height:18.0px;background:#282828;border-radius:0 4px 4px 0;"></div>
<span class="t" style="left:1362.8px;top:49.23px;font-size:11.5px;letter-spacing:0.14px;color:#e6e6e6;">Dyntopo</span><svg style="left:1412.5px;top:51.8px;" width="12" height="12" viewBox="0 0 12 12"><path d="M3.2 4.6 L6 7.4 L8.8 4.6" fill="none" stroke="#e6e6e6" stroke-width="1.25" stroke-linecap="round" stroke-linejoin="round"/></svg>
<div style="left:1431.7px;top:48.0px;width:65.5px;height:18.0px;background:#282828;border-radius:4px;"></div>
<span class="t" style="left:1438.8px;top:49.23px;font-size:11.5px;letter-spacing:-0.40px;color:#e6e6e6;">Remesh</span><svg style="left:1484.5px;top:51.8px;" width="12" height="12" viewBox="0 0 12 12"><path d="M3.2 4.6 L6 7.4 L8.8 4.6" fill="none" stroke="#e6e6e6" stroke-width="1.25" stroke-linecap="round" stroke-linejoin="round"/></svg>
<div style="left:1503.8px;top:48.0px;width:64.0px;height:18.0px;background:#282828;border-radius:4px;"></div>
<span class="t" style="left:1510.5px;top:49.23px;font-size:11.5px;letter-spacing:0.11px;color:#e6e6e6;">Options</span><svg style="left:1555.0px;top:51.8px;" width="12" height="12" viewBox="0 0 12 12"><path d="M3.2 4.6 L6 7.4 L8.8 4.6" fill="none" stroke="#e6e6e6" stroke-width="1.25" stroke-linecap="round" stroke-linejoin="round"/></svg>
<div style="left:0.0px;top:78.9px;width:38.0px;height:891.1px;background:#3a3a3a;border-radius:0 4px 0 0;"></div>
<div style="left:0.0px;top:78.9px;width:38.0px;height:34.0px;background:#4772b3;border-radius:0 4px 0 0;overflow:hidden;"><svg style="left:0;top:-1.5px" width="38" height="37" viewBox="0 0 38 37"><circle cx="19" cy="17.5" r="10.4" fill="#8f8f8f" stroke="#5d5856" stroke-width="0.5"/><path d="M10 23.4 Q12.6 11.6 27 7.6 Q27 11 24.4 12 Q16 14.6 10 23.4Z" fill="#a4caf0"/><path d="M24.4 12 Q16 14.6 10 23.4" fill="none" stroke="#3d85e0" stroke-width="0.9"/></svg>
</div>
<div style="left:0.0px;top:113.9px;width:38.0px;height:34.0px;background:#262626;border-radius:0px;overflow:hidden;"><svg style="left:0;top:-1.5px" width="38" height="37" viewBox="0 0 38 37"><circle cx="19" cy="17.5" r="10.4" fill="#8f8f8f" stroke="#5d5856" stroke-width="0.5"/><path d="M9.6 24 Q13 12 27.2 5.6 Q26.6 9.6 27.8 11 Q17 14 9.6 24Z" fill="#a4caf0" stroke="#2b2523" stroke-width="0.7"/></svg>
</div>
<div style="left:0.0px;top:148.8px;width:38.0px;height:34.1px;background:#262626;border-radius:0px;overflow:hidden;"><svg style="left:0;top:-1.5px" width="38" height="37" viewBox="0 0 38 37"><circle cx="19" cy="19" r="10.4" fill="#8f8f8f" stroke="#5d5856" stroke-width="0.5"/><path d="M10.5 13.5 L13 10 L16 11 L17 7.5 L20 8.5 L22 6 L24.5 8.5 L27.5 8 L27.8 11.5 L30.5 13 L29 16 L30.5 19 L28 20.5 L27.5 23 L24.5 21.5 L23 18.5 L20.5 18 L19.5 15 L16.5 15.5 L14.5 13.5 Z" fill="#a4caf0" stroke="#2b2523" stroke-width="0.6"/><path d="M17 11 L20 13 M22 10 L24 13 L26 12 M24 16 L27 17" stroke="#2b2523" stroke-width="0.7" fill="none"/></svg>
</div>
<div style="left:0.0px;top:183.8px;width:38.0px;height:34.1px;background:#262626;border-radius:0px;overflow:hidden;"><svg style="left:0;top:-1.5px" width="38" height="37" viewBox="0 0 38 37"><circle cx="19" cy="18.5" r="10.4" fill="#8f8f8f" stroke="#5d5856" stroke-width="0.5"/><path d="M11.5 13.5 Q14 8.5 18 8 L20.5 9.5 L22.5 5.8 L24.6 6.8 L23.6 10.5 L26.6 6.8 L28.6 8.4 L27 12 L29.6 10.6 L30.6 12.6 L30 19 Q28 21.5 25.5 21 Q22 18.5 18 18.5 Q14.5 16.5 11.5 13.5Z" fill="#a4caf0" stroke="#2b2523" stroke-width="0.6"/><path d="M20.8 10 L23.6 16.5 M24 11 L27 17" stroke="#8f8f8f" stroke-width="1.4"/></svg>
</div>
<div style="left:0.0px;top:218.7px;width:38.0px;height:34.0px;background:#262626;border-radius:0px;overflow:hidden;"><svg style="left:0;top:-1.5px" width="38" height="37" viewBox="0 0 38 37"><path d="M8.8 18 Q8.6 11 14 10 Q20 9.5 25 6.6 Q28.6 6.4 29.2 10.5 Q30.6 20 26.5 25 Q20 30.5 13 26.5 Q9 23 8.8 18Z" fill="#8f8f8f" stroke="#5d5856" stroke-width="0.5"/><path d="M12 13.4 Q18 11.8 26.6 7.6 Q27.6 9.6 23.5 12 Q17 15.6 12.6 15.2 Q11.4 14.4 12 13.4Z" fill="#a4caf0" stroke="#2b2523" stroke-width="0.6"/></svg>
</div>
<div style="left:0.0px;top:253.7px;width:38.0px;height:34.0px;background:#262626;border-radius:0px;overflow:hidden;"><svg style="left:0;top:-1.5px" width="38" height="37" viewBox="0 0 38 37"><circle cx="19" cy="17.5" r="10.4" fill="#8f8f8f" stroke="#5d5856" stroke-width="0.5"/><path d="M9.6 22.5 Q11.6 10.5 27.6 8.6" fill="none" stroke="#2b2523" stroke-width="5.6"/><path d="M9.6 22.5 Q11.6 10.5 27.6 8.6" fill="none" stroke="#a4caf0" stroke-width="4.4"/></svg>
</div>
<div style="left:0.0px;top:288.6px;width:38.0px;height:34.1px;background:#262626;border-radius:0px;overflow:hidden;"><svg style="left:0;top:-1.5px" width="38" height="37" viewBox="0 0 38 37"><circle cx="19" cy="17.5" r="10.4" fill="#8f8f8f" stroke="#5d5856" stroke-width="0.5"/><circle cx="25.2" cy="11.4" r="5.6" fill="#a4caf0" stroke="#2b2523" stroke-width="0.5"/></svg>
</div>
<div style="left:0.0px;top:323.6px;width:38.0px;height:34.1px;background:#262626;border-radius:0px;overflow:hidden;"><svg style="left:0;top:-1.5px" width="38" height="37" viewBox="0 0 38 37"><circle cx="18.5" cy="18" r="10.4" fill="#8f8f8f" stroke="#5d5856" stroke-width="0.5"/><circle cx="25.4" cy="10.4" r="4.2" fill="#a4caf0" stroke="#2b2523" stroke-width="0.5"/><circle cx="21.6" cy="16" r="2.6" fill="#a4caf0" stroke="#2b2523" stroke-width="0.5"/><circle cx="28" cy="17.4" r="2.8" fill="#a4caf0" stroke="#2b2523" stroke-width="0.5"/></svg>
</div>
<div style="left:0.0px;top:358.5px;width:38.0px;height:34.1px;background:#262626;border-radius:0px;overflow:hidden;"><svg style="left:0;top:-1.5px" width="38" height="37" viewBox="0 0 38 37"><circle cx="19" cy="17.5" r="10.4" fill="#8f8f8f" stroke="#5d5856" stroke-width="0.5"/><path d="M12 22.6 Q15 11.5 25 7.6 L24.6 10.4 Q17 14 12 22.6Z" fill="#a4caf0"/><path d="M24.8 10.2 Q17 14 12 22.6" fill="none" stroke="#2b2523" stroke-width="0.8"/><path d="M25 7 L27.8 10.6 L24.6 10.6Z" fill="#262626"/></svg>
</div>
<div style="left:0.0px;top:393.5px;width:38.0px;height:34.1px;background:#262626;border-radius:0px;overflow:hidden;"><svg style="left:0;top:-1.5px" width="38" height="37" viewBox="0 0 38 37"><path d="M8.6 17 Q9 8 19 7.2 Q29 8 29.6 17 L27 19 L29 21.5 L25 23 L26 26 L21 25.5 L18.5 28.5 L16 25.5 L11.5 26.5 L12.5 23 L9 22 L10.5 19.5 Z" fill="#8f8f8f" stroke="#5d5856" stroke-width="0.5"/><path d="M10.6 13.6 Q12.6 8 19 7.2 Q28 7.8 29.4 17.6 Q24 13 19.6 14.6 Q14.6 12.4 10.6 13.6Z" fill="#d9965c"/><path d="M11 17 L18 15 L25 18.5 L13 21 L24 21.5 L15 24.5" stroke="#2b2523" stroke-width="0.8" fill="none"/></svg>
</div>
<div style="left:0.0px;top:428.4px;width:38.0px;height:34.1px;background:#262626;border-radius:0px;overflow:hidden;"><svg style="left:0;top:-1.5px" width="38" height="37" viewBox="0 0 38 37"><path d="M17.2 7.4 Q10 8 8.8 16 Q8.6 25 17 27.6 Q26 28.6 29.2 19.4 Z" fill="#8f8f8f" stroke="#5d5856" stroke-width="0.5"/><ellipse cx="23.4" cy="13.2" rx="8.3" ry="3.1" transform="rotate(43 23.4 13.2)" fill="#d9965c" stroke="#2b2523" stroke-width="0.5"/></svg>
</div>
<div style="left:0.0px;top:463.4px;width:38.0px;height:34.1px;background:#262626;border-radius:0px;overflow:hidden;"><svg style="left:0;top:-1.5px" width="38" height="37" viewBox="0 0 38 37"><path d="M8.8 18 Q9 10.5 15 9 L19 5.6 L21 8 L19 12 L24.6 8.2 L27.2 10 L23.5 15.5 L29.6 13.6 L31.5 16.4 L27.5 19.5 Q28.6 25 22 27.6 Q13 29.6 9.4 22.6Z" fill="#8f8f8f" stroke="#5d5856" stroke-width="0.5"/><path d="M19.6 8.6 L22 9.4 L17.6 17 L15.4 15.6Z M26 11.6 L27.6 13.4 L22.4 20.4 L20.6 18.6Z" fill="#d9965c"/></svg>
</div>
<div style="left:0.0px;top:498.3px;width:38.0px;height:34.0px;background:#262626;border-radius:0px;overflow:hidden;"><svg style="left:0;top:-1.5px" width="38" height="37" viewBox="0 0 38 37"><path d="M8.8 19 Q9 12 13.5 10.5 L15 6.4 L18 8 L18.6 11 L21 7 L24 8 L27.6 11 L26.4 14 L30.8 16 L28 18.5 L30.6 21.4 L26.4 22.5 L25 26.4 Q18 30 11.6 25.6 Q8.8 22.6 8.8 19Z" fill="#8f8f8f" stroke="#5d5856" stroke-width="0.5"/><path d="M19 12.6 L22.6 9.6 L25.6 12.6 L24 17.6 L20.6 22 L17.4 19.6Z" fill="#d9965c" stroke="#2b2523" stroke-width="0.4"/></svg>
</div>
<div style="left:0.0px;top:533.2px;width:38.0px;height:34.0px;background:#262626;border-radius:0px;overflow:hidden;"><svg style="left:0;top:-1.5px" width="38" height="37" viewBox="0 0 38 37"><circle cx="19" cy="17.5" r="10.4" fill="#8f8f8f" stroke="#5d5856" stroke-width="0.5"/><path d="M11.4 11.4 L16.6 7.6 L22.2 14.2 L27.7 8.6 L28.7 13.2 L19.4 19.7 Z" fill="#d9965c" stroke="#2b2523" stroke-width="0.5"/></svg>
</div>
<div style="left:0.0px;top:568.2px;width:38.0px;height:34.0px;background:#262626;border-radius:0px;overflow:hidden;"><svg style="left:0;top:-1.5px" width="38" height="37" viewBox="0 0 38 37"><circle cx="19" cy="17.5" r="10.4" fill="#8f8f8f" stroke="#5d5856" stroke-width="0.5"/><path d="M9.7 20 L26.4 8.8" stroke="#2b2523" stroke-width="1.3"/><path d="M9.2 19 L13.6 23.6 L9.6 23Z M23.4 8.6 L27.6 11.6 L27.8 9.4Z" fill="#e8d78f"/><path d="M7 5.4 L10.6 5.8 L9.8 7.4 L14.6 11.4 L12.4 13.6 L8.2 9 L6.8 10.2Z" fill="#e8d78f"/><path d="M19.4 18.4 L25 18.8 L23.6 20.4 L26 22.8 L24.2 24.6 L21.8 22.2 L20 23.8Z" fill="#e8d78f"/></svg>
</div>
<div style="left:0.0px;top:603.1px;width:38.0px;height:34.0px;background:#262626;border-radius:0px;overflow:hidden;"><svg style="left:0;top:-1.5px" width="38" height="37" viewBox="0 0 38 37"><circle cx="19" cy="17.5" r="10.4" fill="#8f8f8f" stroke="#5d5856" stroke-width="0.5"/><path d="M17.8 7.2 L29.6 7.2 L29.6 19 Q22 19.6 18.6 14 Q17.2 11 17.8 7.2Z" fill="#e8d78f" stroke="#2b2523" stroke-width="0.5"/></svg>
</div>
<div style="left:0.0px;top:638.1px;width:38.0px;height:34.0px;background:#262626;border-radius:0px;overflow:hidden;"><svg style="left:0;top:-1.5px" width="38" height="37" viewBox="0 0 38 37"><circle cx="17" cy="19.4" r="9.8" fill="#8f8f8f" stroke="#5d5856" stroke-width="0.5"/><path d="M11 10 Q16 5.6 24 6 Q31 7.6 33 13 L30.4 16.4 L32.6 17.6 Q31 21.6 26 22.4 Q17 22.6 12.6 17 Q10.4 13.6 11 10Z" fill="#e8d78f" stroke="#2b2523" stroke-width="0.5"/></svg>
</div>
<div style="left:0.0px;top:673.1px;width:38.0px;height:34.0px;background:#262626;border-radius:0px;overflow:hidden;"><svg style="left:0;top:-1.5px" width="38" height="37" viewBox="0 0 38 37"><circle cx="17" cy="19.4" r="9.8" fill="#8f8f8f" stroke="#5d5856" stroke-width="0.5"/><path d="M11.6 12 Q15 8 21 8.4 Q25.6 9 27 6.6 L26.6 4 L30 2.8 L31 7 Q30.6 11 28.4 13 Q27.6 20 25 25.6 Q17 23.6 13 18.6 Q11 15 11.6 12Z" fill="#e8d78f" stroke="#2b2523" stroke-width="0.5"/></svg>
</div>
<div style="left:0.0px;top:708.0px;width:38.0px;height:34.0px;background:#262626;border-radius:0px;overflow:hidden;"><svg style="left:0;top:-1.5px" width="38" height="37" viewBox="0 0 38 37"><circle cx="19" cy="18" r="10.4" fill="#8f8f8f" stroke="#5d5856" stroke-width="0.5"/><path d="M19.4 8 Q24 8.6 27.6 5.2 Q28.6 9 28.2 12.6 Q23 13.6 19.4 8Z" fill="#e8d78f"/></svg>
</div>
<div style="left:0.0px;top:743.0px;width:38.0px;height:34.0px;background:#262626;border-radius:0px;overflow:hidden;"><svg style="left:0;top:-1.5px" width="38" height="37" viewBox="0 0 38 37"><path d="M5.6 13.6 Q4.4 9 8.8 7.6 Q12 7 14 9.6 L22 20.5 L16 26.5 Q13 25 11.5 22.5Z" fill="#8f8f8f"/><path d="M14.4 20.6 L26.6 8.4 Q29.6 6.2 32.2 8.6 Q34.4 11.4 32 14.4 L20.4 26.4 Q17.4 28.6 14.8 26.2 Q12.6 23.4 14.4 20.6Z" fill="#e8d78f" stroke="#2b2523" stroke-width="0.6"/><path d="M17.8 23.2 L29 11.6" stroke="#2b2523" stroke-width="1.1"/><circle cx="17.8" cy="23.2" r="1.5" fill="#2b2523"/><circle cx="29" cy="11.6" r="1.5" fill="#2b2523"/></svg>
</div>
<div style="left:0.0px;top:777.9px;width:38.0px;height:34.0px;background:#262626;border-radius:0px;overflow:hidden;"><svg style="left:0;top:-1.5px" width="38" height="37" viewBox="0 0 38 37"><circle cx="18.5" cy="18" r="10.4" fill="#8f8f8f" stroke="#5d5856" stroke-width="0.5"/><path d="M12.4 9.6 Q19 6 26.6 10 Q29.6 14 29 20.6 Q26 23.4 21.6 23.6 Q14 20.6 12 14 Z" fill="#e8d78f"/><path d="M13 12.6 Q21 9 28.6 17 M12.4 16 Q20 13.6 27.6 22" fill="none" stroke="#2b2523" stroke-width="0.9"/><path d="M15 8.4 Q22 8 28.4 13.6" fill="none" stroke="#2b2523" stroke-width="0.7"/></svg>
</div>
<div style="left:0.0px;top:812.9px;width:38.0px;height:34.0px;background:#262626;border-radius:0px;overflow:hidden;"><svg style="left:0;top:-1.5px" width="38" height="37" viewBox="0 0 38 37"><circle cx="19" cy="18" r="10.4" fill="#8f8f8f" stroke="#5d5856" stroke-width="0.5"/><path d="M12.6 19.6 Q11 10 19.6 8.6 Q28.6 9 28.6 17 Q27.6 21 24 22 L23.6 17.6 Q24.6 14 21 13.6 Q17.6 14 18 17.6 L20.6 18 L16.6 24.6 L10.4 20.4Z" fill="#e8d78f" stroke="#2b2523" stroke-width="0.5"/></svg>
</div>
<div style="left:0.0px;top:847.8px;width:38.0px;height:34.0px;background:#262626;border-radius:0px;overflow:hidden;"><svg style="left:0;top:-1.5px" width="38" height="37" viewBox="0 0 38 37"><g fill="none" stroke="#ececec" stroke-width="0.9"><circle cx="18.5" cy="19" r="10.4"/><ellipse cx="18.5" cy="19" rx="10.4" ry="4.4" transform="rotate(40 18.5 19)"/><ellipse cx="18.5" cy="19" rx="10.4" ry="4.4" transform="rotate(-50 18.5 19)"/><ellipse cx="18.5" cy="19" rx="10.4" ry="8" transform="rotate(-50 18.5 19)"/><path d="M11 26.4 L26 11.6"/></g><path d="M32.6 4.6 L25.6 5.8 L27.8 7.6 L25.6 10.4 L27.6 12 L29.8 9.4 L31.6 11.2Z" fill="#e8d78f"/></svg>
</div>
<div style="left:0.0px;top:882.8px;width:38.0px;height:34.0px;background:#262626;border-radius:0px;overflow:hidden;"><svg style="left:0;top:-1.5px" width="38" height="37" viewBox="0 0 38 37"><path d="M7.4 19.6 L13 9 L29.6 18.6 L23 29 Q12 28 7.4 19.6Z" fill="#8f8f8f" stroke="#5d5856" stroke-width="0.5"/><ellipse cx="21.3" cy="13.8" rx="9.6" ry="5" transform="rotate(32 21.3 13.8)" fill="#e8d78f" stroke="#2b2523" stroke-width="0.5"/><ellipse cx="22.4" cy="13" rx="7" ry="3.2" transform="rotate(32 22.4 13)" fill="#8f8f8f"/><path d="M26 8 Q32.6 12.4 30.6 20.6 L28.6 25" fill="none" stroke="#c8c8c8" stroke-width="0.8"/><path d="M27 24 L30.6 24.8 L28.4 27.6Z" fill="#e8d78f"/></svg>
</div>
<div style="left:0.0px;top:917.7px;width:38.0px;height:34.0px;background:#262626;border-radius:0px;overflow:hidden;"><svg style="left:0;top:-1.5px" width="38" height="37" viewBox="0 0 38 37"><path d="M19.6 5.4 Q22.6 8 24 13 Q28 18.6 33 19.4 Q31 23 26.4 24.4 L25 27.6 L17 29.6 L18 27 L9.6 26 L11 22.6 Q7.6 22 5 19 Q11 16.6 14 11.6 Q16.6 6.4 19.6 5.4Z" fill="#d8d8d8" stroke="#777" stroke-width="0.5"/><path d="M19.6 6.4 Q20 16 17 26 M21 9 Q24 17 24.4 26 M16 11 Q13 18 10 22.6" stroke="#9a9a9a" stroke-width="0.7" fill="none"/></svg>
</div>
<div style="left:0.0px;top:952.7px;width:38.0px;height:34.0px;background:#262626;border-radius:0px;overflow:hidden;"><svg style="left:0;top:-1.5px" width="38" height="37" viewBox="0 0 38 37"><circle cx="15" cy="25.6" r="9.6" fill="#8f8f8f"/><g fill="none" stroke="#ececec" stroke-width="0.9"><circle cx="22.4" cy="20" r="10.2" fill="#262626"/><circle cx="22.4" cy="20" r="10.2"/><ellipse cx="22.4" cy="20" rx="10.2" ry="4.4" transform="rotate(40 22.4 20)"/><ellipse cx="22.4" cy="20" rx="10.2" ry="4.4" transform="rotate(-50 22.4 20)"/><path d="M15 27 L30 13 M22.4 10 V30 M12.4 20 H32.4"/></g></svg>
</div>
<span class="t" style="left:56.1px;top:78.23px;font-size:11.5px;letter-spacing:0.02px;color:#ffffff;text-shadow:0 0 1px #000,0 0 2px #000,0 1px 2px #000;-webkit-text-stroke:0.3px #fff;">User Perspective (Local)</span><span class="t" style="left:56.1px;top:96.23px;font-size:11.5px;letter-spacing:0.17px;color:#ffffff;text-shadow:0 0 1px #000,0 0 2px #000,0 1px 2px #000;-webkit-text-stroke:0.3px #fff;">(0) skuill.001</span><svg style="left:1470.0px;top:70.0px;" width="110" height="100" viewBox="0 0 110 100"><circle cx="27.7" cy="49.5" r="6.6" fill="#4a3a3c" stroke="#c8414e" stroke-width="1"/><circle cx="40.2" cy="51" r="7.4" fill="#575757" stroke="#c08a52" stroke-width="1"/><circle cx="56" cy="82" r="7.2" fill="#34507c" stroke="#3b83e6" stroke-width="1"/><circle cx="71.7" cy="48.3" r="7" fill="#4b4b45"/><text x="71.7" y="52" font-size="10" font-family="Liberation Sans,sans-serif" text-anchor="middle" fill="#1a1a1a">Y</text><path d="M56 25 V50" stroke="#2f83f0" stroke-width="2"/><path d="M56 50 H78" stroke="#e8384f" stroke-width="2"/><circle cx="56" cy="17.7" r="8" fill="#2f83f0"/><circle cx="83.5" cy="50.4" r="8.4" fill="#e8384f"/><text x="56" y="21.6" font-size="10.5" font-weight="bold" font-family="Liberation Sans,sans-serif" text-anchor="middle" fill="#0b1a33">Z</text><text x="83.5" y="54.2" font-size="10.5" font-weight="bold" font-family="Liberation Sans,sans-serif" text-anchor="middle" fill="#3a0a10">X</text></svg>
<div style="left:1541.0px;top:161.4px;width:26.8px;height:26.8px;background:#303030;border-radius:50%;"></div>
<div style="left:1541.0px;top:191.4px;width:26.8px;height:26.8px;background:#303030;border-radius:50%;"></div>
<div style="left:1541.0px;top:221.5px;width:26.8px;height:26.8px;background:#303030;border-radius:50%;"></div>
<div style="left:1541.0px;top:251.7px;width:26.8px;height:26.8px;background:#303030;border-radius:50%;"></div>
<svg style="left:1545.0px;top:165.0px;" width="20" height="20" viewBox="0 0 20 20"><circle cx="11.8" cy="7.6" r="5.7" fill="#e0dcda"/><path d="M7.8 11.8 L2.2 17.4" stroke="#e8e8e8" stroke-width="1.9" stroke-linecap="round"/><path d="M11.8 4.6 V10.6 M8.8 7.6 H14.8" stroke="#262626" stroke-width="1.2"/></svg>
<svg style="left:1545.0px;top:195.0px;" width="20" height="20" viewBox="0 0 20 20"><ellipse cx="10.6" cy="13.6" rx="4.6" ry="4.2" fill="#e8e8e8"/><g stroke="#e8e8e8" stroke-width="2.1" stroke-linecap="round" fill="none"><path d="M7 11.4 L5.6 5.8"/><path d="M9.3 10.4 L8.9 3.4"/><path d="M11.8 10.4 L12.4 3.6"/><path d="M14 11.6 L15.7 6.4"/><path d="M7 15 L2.8 11.6"/></g></svg>
<svg style="left:1545.0px;top:225.0px;" width="20" height="20" viewBox="0 0 20 20"><g fill="none" stroke="#e8e8e8" stroke-width="1.2" stroke-linejoin="round"><path d="M4 9.6 Q1.6 9.6 1.6 7.4 Q1.6 5 4.4 5 L7 5 Q8 2.4 11.2 2.4 Q14.8 2.4 14.8 6 Q14.8 9.6 11.2 9.6 Z"/><circle cx="11.3" cy="5.9" r="1.1"/><path d="M4.4 6.3 V8.3 M3.4 7.3 H5.4"/><rect x="5.8" y="11.8" width="6.6" height="5.2" rx="0.8"/><path d="M14 14.4 L17.2 12.4 V16.4 Z"/><path d="M3.6 12.6 H5.4"/></g></svg>
<svg style="left:1545.0px;top:255.0px;" width="20" height="20" viewBox="0 0 20 20"><g fill="none" stroke="#fff" stroke-width="1.3"><path d="M5 3 H15 L18 17 H2 Z M8.3 3 L7.3 17 M11.7 3 L12.7 17 M4.2 7.2 H15.8 M3.2 11.8 H16.8"/></g></svg>
<div style="left:1567.5px;top:83.5px;width:8.8px;height:15.0px;background:#353535;border-radius:4px 0 0 4px;"></div>
<svg style="left:1568.5px;top:86.0px;" width="8" height="10" viewBox="0 0 8 10"><path d="M5.5 1.5 L2 5 L5.5 8.5" fill="none" stroke="#b8b8b8" stroke-width="1.1"/></svg>
<div style="left:0.0px;top:0.0px;width:1896.0px;height:19.0px;background:#111111;"></div>
<div style="left:0.0px;top:0.0px;width:1097.0px;height:17.0px;background:#1d1d1d;"></div>
<svg style="left:0.0px;top:-3.0px;" width="17" height="15" viewBox="0 0 17 15"><g fill="none" stroke="#e6e6e6" stroke-width="2.2" stroke-linecap="round"><circle cx="10.2" cy="9" r="4.3"/><path d="M0.5 11.5 L8 6 M2 5.2 L8 5.2"/></g><circle cx="10.2" cy="9" r="1.6" fill="#e6e6e6"/></svg>
<span class="t" style="left:26.2px;top:-2.87px;font-size:11.5px;letter-spacing:-0.34px;color:#e6e6e6;">File</span><span class="t" style="left:58.5px;top:-2.87px;font-size:11.5px;letter-spacing:0.29px;color:#e6e6e6;">Edit</span><span class="t" style="left:94.9px;top:-2.87px;font-size:11.5px;letter-spacing:-0.46px;color:#e6e6e6;">Render</span><span class="t" style="left:145.5px;top:-2.87px;font-size:11.5px;letter-spacing:0.16px;color:#e6e6e6;">Window</span><span class="t" style="left:202.9px;top:-2.87px;font-size:11.5px;letter-spacing:-0.28px;color:#e6e6e6;">Help</span><div style="left:376.0px;top:0.0px;width:67.0px;height:17.0px;background:#2e2e2e;border-radius:0;"></div>
<span class="t" style="left:260.8px;top:0.13px;font-size:11.5px;letter-spacing:-0.03px;color:#a0a0a0;">Layout</span><span class="t" style="left:315.9px;top:0.13px;font-size:11.5px;letter-spacing:0.20px;color:#a0a0a0;">Modeling</span><span class="t" style="left:384.7px;top:0.13px;font-size:11.5px;letter-spacing:0.10px;color:#ffffff;">Sculpting</span><span class="t" style="left:453.9px;top:0.13px;font-size:11.5px;letter-spacing:-0.04px;color:#a0a0a0;">UV Editing</span><span class="t" style="left:529.0px;top:0.13px;font-size:11.5px;color:#a0a0a0;">Texture Paint</span><span class="t" style="left:616.9px;top:0.13px;font-size:11.5px;color:#a0a0a0;">Shading</span><span class="t" style="left:679.7px;top:0.13px;font-size:11.5px;letter-spacing:0.11px;color:#a0a0a0;">Animation</span><span class="t" style="left:751.9px;top:0.13px;font-size:11.5px;letter-spacing:-0.26px;color:#a0a0a0;">Rendering</span><span class="t" style="left:823.7px;top:0.13px;font-size:11.5px;letter-spacing:0.31px;color:#a0a0a0;">Compositing</span><span class="t" style="left:911.8px;top:0.13px;font-size:11.5px;color:#a0a0a0;">Geometry Nodes</span><span class="t" style="left:1020.0px;top:0.13px;font-size:11.5px;letter-spacing:0.14px;color:#a0a0a0;">Scripting</span><svg style="left:1083.0px;top:3.0px;" width="10" height="10" viewBox="0 0 10 10"><path d="M5 0.5V9.5M0.5 5H9.5" stroke="#b0b0b0" stroke-width="1.2" fill="none"/></svg>
<div style="left:1097.0px;top:0.0px;width:799.0px;height:17.0px;background:#181818;"></div>
<div style="left:1514.5px;top:-6.0px;width:191.2px;height:20.2px;background:#282828;border-radius:4px;border:1px solid #3a3a3a;"></div>
<div style="left:1546.0px;top:-6.0px;width:119.5px;height:19.2px;background:#1d1d1d;border-radius:0px;"></div>
<div style="left:1666.0px;top:-6.0px;width:19.0px;height:19.2px;background:#545454;border-radius:0px;"></div>
<div style="left:1685.6px;top:-6.0px;width:19.1px;height:19.2px;background:#3a3a3a;border-radius:0 3px 3px 0;"></div>
<span class="t" style="left:1552.8px;top:-3.27px;font-size:11.5px;letter-spacing:-0.48px;color:#e6e6e6;">Scene</span><svg style="left:1533.5px;top:-1.0px;" width="12" height="12" viewBox="0 0 12 12"><path d="M3.2 4.6 L6 7.4 L8.8 4.6" fill="none" stroke="#e6e6e6" stroke-width="1.25" stroke-linecap="round" stroke-linejoin="round"/></svg>
<svg style="left:1518.5px;top:-3.2px;" width="16" height="16" viewBox="0 0 16 16"><path d="M5 1 L9.5 11 H0.8 Z" fill="#e6e6e6"/><circle cx="11.5" cy="3" r="2" fill="#e6e6e6"/><circle cx="10.5" cy="10.5" r="3.2" fill="#282828" stroke="#e6e6e6" stroke-width="1.2"/></svg>
<svg style="left:1646.0px;top:-4.0px;" width="16" height="16" viewBox="0 0 16 16"><path d="M2 13 L7 8 M5 4.5 L10.5 10 M6.5 6 L10.5 1.5 L13.5 4.5 L9 8.5" fill="none" stroke="#8a8a8a" stroke-width="1.3" stroke-linecap="round"/></svg>
<svg style="left:1669.0px;top:-3.0px;" width="14" height="14" viewBox="0 0 14 14"><path d="M1.5 4.5 V12.5 H8.5 M4.5 0.5 H9.5 L12.5 3.5 V9.5 H4.5 Z M9.5 0.5 V3.5 H12.5" fill="none" stroke="#e6e6e6" stroke-width="1.2" stroke-linejoin="round"/></svg>
<svg style="left:1690.5px;top:-1.0px;" width="10" height="10" viewBox="0 0 10 10"><path d="M1 1 L9 9 M9 1 L1 9" stroke="#6e6e6e" stroke-width="1.3" fill="none" stroke-linecap="round"/></svg>
<div style="left:1711.4px;top:-6.0px;width:198.6px;height:20.2px;background:#282828;border-radius:4px;border:1px solid #3a3a3a;"></div>
<div style="left:1742.3px;top:-6.0px;width:120.1px;height:19.2px;background:#1d1d1d;border-radius:0px;"></div>
<div style="left:1863.0px;top:-6.0px;width:19.2px;height:19.2px;background:#545454;border-radius:0px;"></div>
<div style="left:1882.8px;top:-6.0px;width:17.2px;height:19.2px;background:#3a3a3a;border-radius:0px;"></div>
<span class="t" style="left:1749.7px;top:-3.27px;font-size:11.5px;letter-spacing:-0.11px;color:#e6e6e6;">ViewLayer</span><svg style="left:1730.0px;top:-1.0px;" width="12" height="12" viewBox="0 0 12 12"><path d="M3.2 4.6 L6 7.4 L8.8 4.6" fill="none" stroke="#e6e6e6" stroke-width="1.25" stroke-linecap="round" stroke-linejoin="round"/></svg>
<svg style="left:1716.0px;top:-5.0px;" width="16" height="16" viewBox="0 0 16 16"><path d="M2 1 V12 H13 M4.5 -1 V9.5 H15" fill="none" stroke="#e6e6e6" stroke-width="1.1"/><rect x="6.5" y="-3" width="9" height="10" fill="#e6e6e6"/><path d="M7.5 6 L10 2 L12 5 L13 4 L14.5 6 Z" fill="#282828"/></svg>
<svg style="left:1866.0px;top:-3.0px;" width="14" height="14" viewBox="0 0 14 14"><path d="M1.5 4.5 V12.5 H8.5 M4.5 0.5 H9.5 L12.5 3.5 V9.5 H4.5 Z M9.5 0.5 V3.5 H12.5" fill="none" stroke="#e6e6e6" stroke-width="1.2" stroke-linejoin="round"/></svg>
<svg style="left:1887.5px;top:-1.0px;" width="10" height="10" viewBox="0 0 10 10"><path d="M1 1 L9 9 M9 1 L1 9" stroke="#6e6e6e" stroke-width="1.3" fill="none" stroke-linecap="round"/></svg>
<div style="left:1579.2px;top:19.0px;width:316.8px;height:167.3px;background:#282828;border-radius:6px 0 0 6px;"></div>
<div style="left:1579.2px;top:19.0px;width:316.8px;height:25.5px;background:#303030;border-radius:6px 0 0 0;"></div>
<div style="left:1579.5px;top:66.0px;width:316.5px;height:20.0px;background:#2c2c2c;"></div>
<div style="left:1579.5px;top:106.0px;width:316.5px;height:20.0px;background:#2c2c2c;"></div>
<div style="left:1579.5px;top:146.0px;width:316.5px;height:20.0px;background:#2c2c2c;"></div>
<div style="left:1582.0px;top:184.9px;width:314.0px;height:1.1px;background:#3d6db0;"></div>
<div style="left:1587.7px;top:22.0px;width:30.9px;height:18.0px;background:#282828;border-radius:4px;"></div>
<svg style="left:1591.0px;top:23.5px;" width="16" height="15" viewBox="0 0 16 15"><rect x="0.5" y="0.8" width="5" height="2.6" fill="#e6e6e6"/><path d="M2.5 3.5 V12 H6.5 M2.5 7.5 H6.5" fill="none" stroke="#e6e6e6" stroke-width="1.2"/><rect x="7.5" y="6" width="6.5" height="2.8" fill="#e6e6e6"/><rect x="7.5" y="10.6" width="6.5" height="2.8" fill="#e6e6e6"/></svg>
<svg style="left:1606.5px;top:25.8px;" width="12" height="12" viewBox="0 0 12 12"><path d="M3.2 4.6 L6 7.4 L8.8 4.6" fill="none" stroke="#e6e6e6" stroke-width="1.25" stroke-linecap="round" stroke-linejoin="round"/></svg>
<div style="left:1624.7px;top:22.0px;width:30.9px;height:18.0px;background:#282828;border-radius:4px;"></div>
<svg style="left:1628.0px;top:23.5px;" width="16" height="15" viewBox="0 0 16 15"><path d="M0.8 3.5 V14 H11 M3 1.8 V12 H13" fill="none" stroke="#e6e6e6" stroke-width="1"/><rect x="5" y="0.5" width="9.5" height="9.5" fill="#e6e6e6"/><path d="M6 9 L8.6 4.5 L10.6 7.5 L11.8 6.3 L13.5 9Z" fill="#282828"/></svg>
<svg style="left:1643.5px;top:25.8px;" width="12" height="12" viewBox="0 0 12 12"><path d="M3.2 4.6 L6 7.4 L8.8 4.6" fill="none" stroke="#e6e6e6" stroke-width="1.25" stroke-linecap="round" stroke-linejoin="round"/></svg>
<div style="left:1676.5px;top:22.0px;width:113.8px;height:18.0px;background:#1d1d1d;border-radius:4px;"></div>
<svg style="left:1680.0px;top:23.5px;" width="16" height="16" viewBox="0 0 16 16"><circle cx="9.3" cy="5.9" r="4.1" fill="none" stroke="#e6e6e6" stroke-width="1.4"/><path d="M6.3 8.9 L1.2 14" stroke="#e6e6e6" stroke-width="1.6" stroke-linecap="round"/></svg>
<span class="t" style="left:1701.8px;top:22.93px;font-size:11.5px;letter-spacing:-0.35px;color:#787878;">Search</span><div style="left:1846.7px;top:22.0px;width:30.9px;height:18.0px;background:#282828;border-radius:4px;"></div>
<svg style="left:1851.0px;top:24.0px;" width="14" height="14" viewBox="0 0 14 14"><path d="M1 1.2 H12.5 L8 6.8 V12.6 L5.5 11 V6.8 Z" fill="none" stroke="#e6e6e6" stroke-width="1.2" stroke-linejoin="round"/></svg>
<svg style="left:1865.5px;top:25.8px;" width="12" height="12" viewBox="0 0 12 12"><path d="M3.2 4.6 L6 7.4 L8.8 4.6" fill="none" stroke="#e6e6e6" stroke-width="1.25" stroke-linecap="round" stroke-linejoin="round"/></svg>
<div style="left:1884.0px;top:22.0px;width:26.0px;height:18.0px;background:#545454;border-radius:4px;"></div>
<svg style="left:1887.0px;top:24.0px;" width="14" height="14" viewBox="0 0 14 14"><path d="M1 3 H13 V6 H1Z M2 6 V13 H13" fill="none" stroke="#e6e6e6" stroke-width="1.2"/><circle cx="11" cy="1.5" r="2.6" fill="#e6e6e6"/></svg>
<div style="left:1599.3px;top:46.2px;width:19.7px;height:17.6px;background:#3c3c3c;border-radius:4px;border:1px solid #6a6a6a;"></div>
<svg style="left:1602.7px;top:48.6px;" width="13" height="13" viewBox="0 0 13 13"><path d="M0.5 0.5 H12.5 V4 H0.5Z" fill="#e6e6e6"/><path d="M1.2 5.2 H11.8 V12.5 H1.2Z" fill="#e6e6e6"/><rect x="4.2" y="7" width="4.6" height="1.6" fill="#333"/><path d="M1.5 2.2 H11.5" stroke="#666" stroke-width="0.8" stroke-dasharray="1 1"/></svg>
<span class="t" style="left:1622.7px;top:48.23px;font-size:11.5px;letter-spacing:0.03px;color:#e6e6e6;">Scene Collection</span><svg style="left:1602.5px;top:70.3px;" width="12" height="12" viewBox="0 0 12 12"><path d="M2.4 4.2 L6 7.8 L9.6 4.2" fill="none" stroke="#c8c8c8" stroke-width="1.25" stroke-linecap="round" stroke-linejoin="round"/></svg>
<svg style="left:1622.4px;top:69.0px;" width="13.5" height="13.5" viewBox="0 0 13 13"><path d="M0.5 0.5 H12.5 V4 H0.5Z" fill="#e6e6e6"/><path d="M1.2 5.2 H11.8 V12.5 H1.2Z" fill="#e6e6e6"/><rect x="4.2" y="7" width="4.6" height="1.6" fill="#333"/><path d="M1.5 2.2 H11.5" stroke="#666" stroke-width="0.8" stroke-dasharray="1 1"/></svg>
<span class="t" style="left:1643.0px;top:68.13px;font-size:11.5px;letter-spacing:0.24px;color:#e6e6e6;">Collection</span><div style="left:1846.0px;top:70.2px;width:10.0px;height:10.0px;background:#e6e6e6;border-radius:1.5px;"></div>
<svg style="left:1846.0px;top:70.2px;" width="10" height="10" viewBox="0 0 10 10"><path d="M2 5.2 L4.3 7.6 L8.3 2.6" fill="none" stroke="#222" stroke-width="1.6"/></svg>
<div style="left:1608.2px;top:88.0px;width:1.0px;height:98.0px;background:#4a4a4a;"></div>
<svg style="left:1623.4px;top:90.2px;" width="12" height="12" viewBox="0 0 12 12"><path d="M4.2 2.4 L7.8 6 L4.2 9.6" fill="none" stroke="#c8c8c8" stroke-width="1.3" stroke-linecap="round" stroke-linejoin="round"/></svg>
<span class="t" style="left:1662.9px;top:88.13px;font-size:11.5px;letter-spacing:-0.26px;color:#e6e6e6;">Camera</span><svg style="left:1623.4px;top:110.2px;" width="12" height="12" viewBox="0 0 12 12"><path d="M4.2 2.4 L7.8 6 L4.2 9.6" fill="none" stroke="#c8c8c8" stroke-width="1.3" stroke-linecap="round" stroke-linejoin="round"/></svg>
<span class="t" style="left:1662.9px;top:108.13px;font-size:11.5px;letter-spacing:0.15px;color:#e6e6e6;">Empty</span><svg style="left:1623.4px;top:130.2px;" width="12" height="12" viewBox="0 0 12 12"><path d="M4.2 2.4 L7.8 6 L4.2 9.6" fill="none" stroke="#c8c8c8" stroke-width="1.3" stroke-linecap="round" stroke-linejoin="round"/></svg>
<span class="t" style="left:1662.9px;top:128.13px;font-size:11.5px;letter-spacing:0.28px;color:#e6e6e6;">Empty.001</span><svg style="left:1623.4px;top:150.2px;" width="12" height="12" viewBox="0 0 12 12"><path d="M4.2 2.4 L7.8 6 L4.2 9.6" fill="none" stroke="#c8c8c8" stroke-width="1.3" stroke-linecap="round" stroke-linejoin="round"/></svg>
<span class="t" style="left:1662.9px;top:148.13px;font-size:11.5px;letter-spacing:0.29px;color:#e6e6e6;">Light</span><svg style="left:1623.4px;top:170.2px;" width="12" height="12" viewBox="0 0 12 12"><path d="M4.2 2.4 L7.8 6 L4.2 9.6" fill="none" stroke="#c8c8c8" stroke-width="1.3" stroke-linecap="round" stroke-linejoin="round"/></svg>
<span class="t" style="left:1662.9px;top:168.13px;font-size:11.5px;letter-spacing:0.11px;color:#e6e6e6;">skuill</span><svg style="left:1641.0px;top:87.5px;" width="16" height="16" viewBox="0 0 16 16"><circle cx="4.3" cy="4.2" r="3.3" fill="#d48f4f"/><circle cx="11" cy="3.8" r="3.8" fill="#d48f4f"/><rect x="2.5" y="7.5" width="9.5" height="6.5" rx="1" fill="#d48f4f"/><path d="M12 11 L15.5 8.5 V14 Z" fill="#d48f4f"/><circle cx="4.3" cy="4.2" r="1.1" fill="#282828"/><circle cx="11" cy="3.8" r="1.3" fill="#282828"/></svg>
<svg style="left:1641.3px;top:108.0px;" width="15" height="15" viewBox="0 0 15 15"><rect x="0.5" y="0.5" width="14" height="14" fill="#d48f4f"/><path d="M1.5 13.5 L6 5.5 L10.5 13.5Z" fill="#2a2a2a"/><circle cx="11" cy="4" r="1.6" fill="#2a2a2a"/></svg>
<svg style="left:1641.3px;top:128.0px;" width="15" height="15" viewBox="0 0 15 15"><rect x="0.5" y="0.5" width="14" height="14" fill="#d48f4f"/><path d="M1.5 13.5 L6 5.5 L10.5 13.5Z" fill="#2a2a2a"/><circle cx="11" cy="4" r="1.6" fill="#2a2a2a"/></svg>
<svg style="left:1641.3px;top:147.5px;" width="15" height="16" viewBox="0 0 15 16"><circle cx="7.5" cy="6" r="5.8" fill="#d48f4f"/><rect x="4.5" y="11" width="6" height="1.6" fill="#d48f4f"/><rect x="5" y="13.4" width="5" height="1.6" fill="#d48f4f"/><path d="M5 5.5 L7 7.5 M10 5.5 L8 7.5" stroke="#2a2a2a" stroke-width="1"/></svg>
<svg style="left:1641.3px;top:168.0px;" width="15" height="15" viewBox="0 0 15 15"><path d="M1.5 1.5 H13.5 L7.5 13.5Z" fill="none" stroke="#d48f4f" stroke-width="2.6" stroke-linejoin="round"/></svg>
<svg style="left:1726.0px;top:88.5px;" width="15" height="15" viewBox="0 0 15 15"><path d="M1 2.5 H5.5 Q7.5 2.5 7.5 5 V8 Q7.5 10.5 10 10.5 H13.5 M11 7.8 L13.8 10.5 L11 13.2" fill="none" stroke="#c8c8c8" stroke-width="1.1"/></svg>
<div style="left:1743.2px;top:86.6px;width:19.6px;height:17.0px;background:#505050;border-radius:4px;border:1px solid #5e5e5e;"></div>
<svg style="left:1745.5px;top:88.5px;" width="15" height="14" viewBox="0 0 15 14"><g fill="none" stroke="#4a90e0" stroke-width="1.1"><path d="M2 8 Q1 4 5 4 Q6 1 9.5 2 Q13 3 12.5 7"/><rect x="3.5" y="8.5" width="6.5" height="4.5"/><path d="M10.5 10.8 L13 9 V13 Z M1 9 V12.5"/></g></svg>
<svg style="left:1720.0px;top:108.4px;" width="14.5" height="14.5" viewBox="0 0 14.5 14.5"><rect x="0.6" y="0.6" width="13" height="13" fill="none" stroke="#d9434e" stroke-width="1" stroke-dasharray="1.5 1"/><path d="M1.5 12.8 L5.5 5.8 L9.5 12.8Z" fill="#d9434e"/><circle cx="9.8" cy="4" r="1.3" fill="#d9434e"/></svg>
<svg style="left:1743.7px;top:128.2px;" width="14.5" height="14.5" viewBox="0 0 14.5 14.5"><rect x="0.6" y="0.6" width="13" height="13" fill="none" stroke="#d9434e" stroke-width="1" stroke-dasharray="1.5 1"/><path d="M1.5 12.8 L5.5 5.8 L9.5 12.8Z" fill="#d9434e"/><circle cx="9.8" cy="4" r="1.3" fill="#d9434e"/></svg>
<svg style="left:1712.5px;top:148.0px;" width="15" height="15" viewBox="0 0 15 15"><g fill="none" stroke="#4a90e0" stroke-width="1.1"><circle cx="7.5" cy="7.5" r="3"/><path d="M7.5 0.5 V3 M7.5 12 V14.5 M0.5 7.5 H3 M12 7.5 H14.5 M2.5 2.5 L4.3 4.3 M10.7 10.7 L12.5 12.5 M12.5 2.5 L10.7 4.3 M4.3 10.7 L2.5 12.5"/></g></svg>
<svg style="left:1712.5px;top:168.0px;" width="15" height="15" viewBox="0 0 15 15"><g fill="none" stroke="#4a90e0" stroke-width="1.2"><path d="M2.5 2.5 H12.5 L7.5 12.5Z"/></g><g fill="#282828" stroke="#4a90e0" stroke-width="1.1"><circle cx="2.5" cy="2.5" r="1.7"/><circle cx="12.5" cy="2.5" r="1.7"/><circle cx="7.5" cy="12.5" r="1.7"/></g></svg>
<svg style="left:1733.5px;top:168.0px;" width="14" height="15" viewBox="0 0 14 15"><path d="M1.8 1.8 H12.2 L7 12.8Z" fill="none" stroke="#d48f4f" stroke-width="2.6" stroke-linejoin="round"/></svg>
<span class="t" style="left:1746.1px;top:171.21px;font-size:9.5px;color:#d0d0d0;">8</span><svg style="left:1586.8px;top:174.0px;" width="5" height="5" viewBox="0 0 5 5"><circle cx="2.5" cy="2.5" r="2.1" fill="#e6e6e6"/></svg>
<svg style="left:1864.0px;top:70.6px;" width="14" height="12" viewBox="0 0 14 12"><path d="M0.8 5.5 Q7 -2.5 13.2 5.5 Q7 13 0.8 5.5Z" fill="none" stroke="#e6e6e6" stroke-width="1.3"/><circle cx="7" cy="5.3" r="2.6" fill="#e6e6e6"/></svg>
<svg style="left:1864.0px;top:90.6px;" width="14" height="12" viewBox="0 0 14 12"><path d="M0.8 5.5 Q7 -2.5 13.2 5.5 Q7 13 0.8 5.5Z" fill="none" stroke="#e6e6e6" stroke-width="1.3"/><circle cx="7" cy="5.3" r="2.6" fill="#e6e6e6"/></svg>
<svg style="left:1864.0px;top:110.6px;" width="14" height="12" viewBox="0 0 14 12"><path d="M0.8 5.5 Q7 -2.5 13.2 5.5 Q7 13 0.8 5.5Z" fill="none" stroke="#e6e6e6" stroke-width="1.3"/><circle cx="7" cy="5.3" r="2.6" fill="#e6e6e6"/></svg>
<svg style="left:1864.0px;top:130.6px;" width="14" height="12" viewBox="0 0 14 12"><path d="M0.8 5.5 Q7 -2.5 13.2 5.5 Q7 13 0.8 5.5Z" fill="none" stroke="#e6e6e6" stroke-width="1.3"/><circle cx="7" cy="5.3" r="2.6" fill="#e6e6e6"/></svg>
<svg style="left:1864.0px;top:150.6px;" width="14" height="12" viewBox="0 0 14 12"><path d="M0.8 5.5 Q7 -2.5 13.2 5.5 Q7 13 0.8 5.5Z" fill="none" stroke="#e6e6e6" stroke-width="1.3"/><circle cx="7" cy="5.3" r="2.6" fill="#e6e6e6"/></svg>
<svg style="left:1864.0px;top:170.6px;" width="14" height="12" viewBox="0 0 14 12"><path d="M0.8 5.5 Q7 -2.5 13.2 5.5 Q7 13 0.8 5.5Z" fill="none" stroke="#e6e6e6" stroke-width="1.3"/><circle cx="7" cy="5.3" r="2.6" fill="#e6e6e6"/></svg>
<svg style="left:1884.0px;top:69.6px;" width="14" height="13" viewBox="0 0 14 13"><path d="M0.5 3 H3.5 L4.8 1 H9.2 L10.5 3 H13.5 V11.5 H0.5Z" fill="#e6e6e6"/><circle cx="7" cy="7" r="3.2" fill="#282828"/><circle cx="7" cy="7" r="1.8" fill="none" stroke="#e6e6e6" stroke-width="1"/></svg>
<svg style="left:1884.0px;top:89.6px;" width="14" height="13" viewBox="0 0 14 13"><path d="M0.5 3 H3.5 L4.8 1 H9.2 L10.5 3 H13.5 V11.5 H0.5Z" fill="#e6e6e6"/><circle cx="7" cy="7" r="3.2" fill="#282828"/><circle cx="7" cy="7" r="1.8" fill="none" stroke="#e6e6e6" stroke-width="1"/></svg>
<svg style="left:1884.0px;top:109.6px;" width="14" height="13" viewBox="0 0 14 13"><path d="M0.7 3.2 H3.5 L4.8 1.2 H9.2 L10.5 3.2 H13.3 V11.3 H0.7Z" fill="none" stroke="#b0b0b0" stroke-width="0.9"/><path d="M5.2 5.2 L8.8 8.8 M8.8 5.2 L5.2 8.8" stroke="#b0b0b0" stroke-width="1"/></svg>
<svg style="left:1884.0px;top:129.6px;" width="14" height="13" viewBox="0 0 14 13"><path d="M0.7 3.2 H3.5 L4.8 1.2 H9.2 L10.5 3.2 H13.3 V11.3 H0.7Z" fill="none" stroke="#b0b0b0" stroke-width="0.9"/><path d="M5.2 5.2 L8.8 8.8 M8.8 5.2 L5.2 8.8" stroke="#b0b0b0" stroke-width="1"/></svg>
<svg style="left:1884.0px;top:149.6px;" width="14" height="13" viewBox="0 0 14 13"><path d="M0.7 3.2 H3.5 L4.8 1.2 H9.2 L10.5 3.2 H13.3 V11.3 H0.7Z" fill="none" stroke="#b0b0b0" stroke-width="0.9"/><path d="M5.2 5.2 L8.8 8.8 M8.8 5.2 L5.2 8.8" stroke="#b0b0b0" stroke-width="1"/></svg>
<svg style="left:1884.0px;top:169.6px;" width="14" height="13" viewBox="0 0 14 13"><path d="M0.5 3 H3.5 L4.8 1 H9.2 L10.5 3 H13.5 V11.5 H0.5Z" fill="#e6e6e6"/><circle cx="7" cy="7" r="3.2" fill="#282828"/><circle cx="7" cy="7" r="1.8" fill="none" stroke="#e6e6e6" stroke-width="1"/></svg>
<div style="left:1579.2px;top:189.0px;width:316.8px;height:781.0px;background:#303030;border-radius:6px 0 0 0;"></div>
<div style="left:1579.2px;top:214.0px;width:27.8px;height:756.0px;background:#1f1f1f;"></div>
<div style="left:1581.0px;top:223.3px;width:26.0px;height:26.0px;background:#303030;border-radius:4px 0 0 4px;"></div>
<div style="left:1587.0px;top:191.5px;width:31.5px;height:19.0px;background:#282828;border-radius:4px;"></div>
<svg style="left:1591.0px;top:194.0px;" width="15" height="14" viewBox="0 0 15 14"><rect x="0.5" y="0.5" width="13.5" height="5.6" rx="2.8" fill="#e6e6e6"/><rect x="0.5" y="7.6" width="13.5" height="5.6" rx="2.8" fill="#e6e6e6"/><circle cx="10.8" cy="3.3" r="1.8" fill="#282828"/><circle cx="3.8" cy="10.4" r="1.8" fill="#282828"/></svg>
<svg style="left:1606.3px;top:195.5px;" width="12" height="12" viewBox="0 0 12 12"><path d="M3.2 4.6 L6 7.4 L8.8 4.6" fill="none" stroke="#e6e6e6" stroke-width="1.25" stroke-linecap="round" stroke-linejoin="round"/></svg>
<div style="left:1688.5px;top:191.5px;width:114.0px;height:19.0px;background:#1d1d1d;border-radius:4px;"></div>
<svg style="left:1692.0px;top:193.5px;" width="16" height="16" viewBox="0 0 16 16"><circle cx="9.3" cy="5.9" r="4.1" fill="none" stroke="#e6e6e6" stroke-width="1.4"/><path d="M6.3 8.9 L1.2 14" stroke="#e6e6e6" stroke-width="1.6" stroke-linecap="round"/></svg>
<span class="t" style="left:1713.5px;top:192.93px;font-size:11.5px;letter-spacing:-0.29px;color:#787878;">Search</span><div style="left:1884.0px;top:191.5px;width:26.0px;height:19.0px;background:#282828;border-radius:4px;"></div>
<svg style="left:1886.5px;top:195.8px;" width="12" height="12" viewBox="0 0 12 12"><path d="M3.2 4.6 L6 7.4 L8.8 4.6" fill="none" stroke="#e6e6e6" stroke-width="1.25" stroke-linecap="round" stroke-linejoin="round"/></svg>
<svg style="left:1586.5px;top:229.0px;" width="14.88" height="14.0" viewBox="0 0 17 16"><path d="M3 1 V7" stroke="#c6c6c6" stroke-width="1.4"/><path d="M1.2 8.5 Q3 7 4.8 8.5 V12.5 Q3 14.5 1.2 12.5Z" fill="#c6c6c6"/><path d="M9.5 1 V4 Q11.2 6 13 4 V1 M11.2 5.5 V14" fill="none" stroke="#c6c6c6" stroke-width="1.7" stroke-linecap="round"/></svg>
<svg style="left:1587.0px;top:265.0px;" width="14.0" height="13.12" viewBox="0 0 16 15"><path d="M4.5 3 L6 0.8 H10 L11.5 3" fill="none" stroke="#c6c6c6" stroke-width="1.2"/><rect x="1" y="3" width="14" height="10.5" rx="1" fill="none" stroke="#c6c6c6" stroke-width="1.3"/><rect x="3.2" y="5.3" width="6.3" height="6" fill="#c6c6c6"/><path d="M11 6 H13 M11 8.3 H13 M11 10.6 H13" stroke="#c6c6c6" stroke-width="1.1"/></svg>
<svg style="left:1587.0px;top:293.5px;" width="14.0" height="13.12" viewBox="0 0 16 15"><path d="M1 1 H15 V6 H1Z" fill="#c6c6c6"/><rect x="3" y="6" width="10" height="8.5" fill="#c6c6c6"/><path d="M4.5 13 L7.5 8.5 L9 10.8 L10 9.8 L11.8 13Z" fill="#222"/></svg>
<svg style="left:1587.0px;top:321.5px;" width="14.0" height="13.12" viewBox="0 0 16 15"><path d="M1 4 V14.2 H11 M3.2 2 V12 H13" fill="none" stroke="#c6c6c6" stroke-width="1"/><rect x="5.3" y="0.5" width="10" height="9.5" fill="none" stroke="#c6c6c6" stroke-width="1.2"/><path d="M6.5 9 L9.3 4.8 L11.3 7.6 L12.3 6.6 L14 9Z" fill="#c6c6c6"/></svg>
<svg style="left:1587.0px;top:349.5px;" width="14.0" height="13.12" viewBox="0 0 16 15"><path d="M5 1.5 L9 12 H1.2Z" fill="#c6c6c6"/><circle cx="12.6" cy="3.8" r="2" fill="#c6c6c6"/><circle cx="11" cy="11" r="3.2" fill="#222" stroke="#c6c6c6" stroke-width="1.2"/></svg>
<svg style="left:1587.0px;top:377.5px;" width="14.0" height="14.0" viewBox="0 0 16 16"><circle cx="8" cy="8" r="6" fill="none" stroke="#cf4a58" stroke-width="1.3"/><path d="M4.5 4.5 L8.5 5.3 L7.5 8 L10 9.8 L8.5 12.8 L6 10.5 L4 9Z" fill="#cf4a58"/><path d="M12.5 2.5 L14.5 1 M1.5 15 L3.5 13.5" stroke="#cf4a58" stroke-width="1.1"/></svg>
<svg style="left:1587.0px;top:413.0px;" width="14.0" height="14.0" viewBox="0 0 16 16"><path d="M1 4.5 V1 H4.5 M11.5 1 H15 V4.5 M15 11.5 V15 H11.5 M4.5 15 H1 V11.5" fill="none" stroke="#d9904c" stroke-width="1.2"/><rect x="3" y="3" width="10" height="10" fill="#d9904c"/></svg>
<svg style="left:1587.0px;top:441.0px;" width="14.0" height="14.0" viewBox="0 0 16 16"><path d="M13.8 2.2 Q10.5 0.5 8.3 3.5 Q7.5 5 8.2 6.5 L1.8 12 Q1 13.5 2.3 14.5 Q3.6 15.2 4.6 14 L10 7.8 Q12.5 8.7 14.3 6.5 Q15.3 5 14.8 3.5 L12.5 5.8 L10.7 4.8 Z" fill="#4e8fe0"/></svg>
<svg style="left:1587.0px;top:469.0px;" width="14.0" height="14.0" viewBox="0 0 16 16"><g stroke="#4e8fe0" stroke-width="1.2" fill="none"><path d="M3 3 L3 13 M3 3 L13 13 M3 3 L13.5 3.5"/></g><circle cx="3" cy="3" r="2" fill="#4e8fe0"/><circle cx="13" cy="13" r="1.7" fill="#4e8fe0"/><circle cx="13.5" cy="3.5" r="1.3" fill="#4e8fe0"/><circle cx="3" cy="13" r="1.3" fill="#4e8fe0"/></svg>
<svg style="left:1587.0px;top:497.0px;" width="14.0" height="14.0" viewBox="0 0 16 16"><path d="M13 4 A6.2 6.2 0 1 0 14 10" fill="none" stroke="#4e8fe0" stroke-width="1.4"/><circle cx="7.5" cy="8.3" r="2.6" fill="#4e8fe0"/><circle cx="13.5" cy="2.8" r="1.7" fill="#4e8fe0"/></svg>
<svg style="left:1587.0px;top:525.0px;" width="14.0" height="14.0" viewBox="0 0 16 16"><path d="M10.5 1.5 L14.5 2.2 L14 6 Q12 8 11.5 10.5 Q9.5 15 5 14.5 Q0.5 13 1.5 8.5 Q3 5 7 5 Q9 4 10.5 1.5Z" fill="none" stroke="#4e8fe0" stroke-width="1.4"/><circle cx="6.3" cy="9.7" r="2.4" fill="none" stroke="#4e8fe0" stroke-width="1.4"/></svg>
<svg style="left:1587.0px;top:553.0px;" width="14.0" height="14.0" viewBox="0 0 16 16"><path d="M3 3 H13 L8 13Z" fill="none" stroke="#4e8fe0" stroke-width="1.2"/><g fill="#222" stroke="#4e8fe0" stroke-width="1.2"><rect x="1.2" y="1.2" width="3.4" height="3.4"/><rect x="11.4" y="1.2" width="3.4" height="3.4"/><rect x="6.3" y="11.4" width="3.4" height="3.4"/></g></svg>
<svg style="left:1587.0px;top:581.0px;" width="14.0" height="14.0" viewBox="0 0 16 16"><circle cx="8" cy="8" r="6.2" fill="none" stroke="#e6e6e6" stroke-width="1.2"/><path d="M8 1.8 A6.2 6.2 0 0 0 3.6 12.4 L8 8Z M8 8 L12.4 12.4 A6.2 6.2 0 0 1 3.6 12.4Z" fill="#cf4a58"/></svg>
<svg style="left:1587.5px;top:617.5px;" width="13.12" height="13.12" viewBox="0 0 15 15"><rect x="0.0" y="0.0" width="3.75" height="3.75" fill="#cf4a58"/><rect x="0.0" y="7.5" width="3.75" height="3.75" fill="#cf4a58"/><rect x="3.75" y="3.75" width="3.75" height="3.75" fill="#cf4a58"/><rect x="3.75" y="11.25" width="3.75" height="3.75" fill="#cf4a58"/><rect x="7.5" y="0.0" width="3.75" height="3.75" fill="#cf4a58"/><rect x="7.5" y="7.5" width="3.75" height="3.75" fill="#cf4a58"/><rect x="11.25" y="3.75" width="3.75" height="3.75" fill="#cf4a58"/><rect x="11.25" y="11.25" width="3.75" height="3.75" fill="#cf4a58"/></svg>
<svg style="left:1622.0px;top:221.5px;" width="22" height="22" viewBox="0 0 22 22"><circle cx="11" cy="10.7" r="10.2" fill="#8f8f8f"/><path d="M2.3 16 Q5 5 18 1.8 Q17 4.5 15 5 Q7 8 2.3 16Z" fill="#9cc4ee"/></svg>
<span class="t" style="left:1652.5px;top:223.93px;font-size:11.5px;letter-spacing:-0.15px;color:#e6e6e6;">Draw</span><div style="left:1615.0px;top:260.4px;width:285.0px;height:180.6px;background:#3d3d3d;border-radius:4px;"></div>
<svg style="left:1621.3px;top:267.8px;" width="12" height="12" viewBox="0 0 12 12"><path d="M2.4 4.2 L6 7.8 L9.6 4.2" fill="none" stroke="#c8c8c8" stroke-width="1.25" stroke-linecap="round" stroke-linejoin="round"/></svg>
<span class="t" style="left:1636.8px;top:265.13px;font-size:11.5px;letter-spacing:-0.16px;color:#e6e6e6;">Brushes</span><svg style="left:1885.0px;top:270.0px;" width="11" height="5" viewBox="0 0 11 5"><rect x="0.6" y="0.4" width="1.2" height="1.2" fill="#9a9a9a"/><rect x="0.6" y="2.9" width="1.2" height="1.2" fill="#9a9a9a"/><rect x="3.1" y="0.4" width="1.2" height="1.2" fill="#9a9a9a"/><rect x="3.1" y="2.9" width="1.2" height="1.2" fill="#9a9a9a"/><rect x="5.6" y="0.4" width="1.2" height="1.2" fill="#9a9a9a"/><rect x="5.6" y="2.9" width="1.2" height="1.2" fill="#9a9a9a"/><rect x="8.1" y="0.4" width="1.2" height="1.2" fill="#9a9a9a"/><rect x="8.1" y="2.9" width="1.2" height="1.2" fill="#9a9a9a"/><rect x="10.6" y="0.4" width="1.2" height="1.2" fill="#9a9a9a"/><rect x="10.6" y="2.9" width="1.2" height="1.2" fill="#9a9a9a"/></svg>
<div style="left:1624.2px;top:294.0px;width:241.4px;height:118.2px;background:#282828;border-radius:4px 4px 0 0;"></div>
<svg style="left:1689.6px;top:297.4px;" width="111" height="111" viewBox="0 0 111 111"><defs><clipPath id="thc"><rect x="0" y="0" width="111" height="111"/></clipPath><filter id="tb3" filterUnits="userSpaceOnUse" x="-30" y="-30" width="180" height="180"><feGaussianBlur stdDeviation="3"/></filter><filter id="tb2" filterUnits="userSpaceOnUse" x="-30" y="-30" width="180" height="180"><feGaussianBlur stdDeviation="2"/></filter><filter id="tb5" filterUnits="userSpaceOnUse" x="-30" y="-30" width="180" height="180"><feGaussianBlur stdDeviation="5"/></filter><radialGradient id="thg" gradientUnits="userSpaceOnUse" cx="28" cy="62" r="95"><stop offset="0" stop-color="#d0d0d3"/><stop offset="0.4" stop-color="#c2c1c2"/><stop offset="0.72" stop-color="#a5a2a0"/><stop offset="1" stop-color="#757270"/></radialGradient><clipPath id="thc2"><circle cx="46" cy="82" r="71"/></clipPath></defs><rect width="111" height="111" fill="#141414"/><g clip-path="url(#thc)"><circle cx="46" cy="82" r="71" fill="url(#thg)"/><g clip-path="url(#thc2)"><path d="M84 34 Q88 50 68 60 Q50 66 45 74" fill="none" stroke="#777472" stroke-width="11" stroke-linecap="round" filter="url(#tb3)"/><path d="M20 84 Q30 100 74 114" fill="none" stroke="#9f9c9a" stroke-width="7" stroke-linecap="round" filter="url(#tb3)"/><path d="M8 30 Q22 16 44 13 Q66 13 76 27 Q82 40 62 49 Q40 57 31 63 Q22 74 34 88 Q50 100 80 110" fill="none" stroke="#d3d3d6" stroke-width="13" stroke-linecap="round" filter="url(#tb2)"/><path d="M16 36 Q38 22 60 27" fill="none" stroke="#9a9795" stroke-width="8" stroke-linecap="round" filter="url(#tb3)"/><ellipse cx="8" cy="35" rx="6" ry="18" fill="#dededf" opacity="0.7" filter="url(#tb3)"/></g></g><rect x="0.5" y="0.5" width="110" height="110" fill="none" stroke="#454545" stroke-width="1"/></svg>
<div style="left:1624.2px;top:412.8px;width:150.5px;height:18.6px;background:#1d1d1d;border-radius:0 0 0 4px;"></div>
<span class="t" style="left:1630.5px;top:413.93px;font-size:11.5px;letter-spacing:0.08px;color:#e6e6e6;">SculptDraw</span><div style="left:1775.7px;top:412.8px;width:30.5px;height:18.6px;background:#545454;border-radius:0px;"></div>
<span class="t" style="left:1787.0px;top:413.93px;font-size:11.5px;color:#e6e6e6;">2</span><div style="left:1807.0px;top:412.8px;width:19.0px;height:18.6px;background:#4772b3;border-radius:0px;"></div>
<svg style="left:1809.5px;top:414.6px;" width="14" height="15" viewBox="0 0 14 15"><path d="M7 0.8 L12.8 2.8 V7.5 Q12.5 12 7 14.2 Q1.5 12 1.2 7.5 V2.8Z" fill="#fff"/><path d="M4 7.3 L6.3 9.8 L10.2 4.8" fill="none" stroke="#4772b3" stroke-width="1.6"/></svg>
<div style="left:1826.8px;top:412.8px;width:19.6px;height:18.6px;background:#545454;border-radius:0px;"></div>
<svg style="left:1830.0px;top:415.0px;" width="14" height="14" viewBox="0 0 14 14"><path d="M1.5 4.5 V12.5 H8.5 M4.5 0.5 H9.5 L12.5 3.5 V9.5 H4.5 Z M9.5 0.5 V3.5 H12.5" fill="none" stroke="#e6e6e6" stroke-width="1.2" stroke-linejoin="round"/></svg>
<div style="left:1847.1px;top:412.8px;width:18.5px;height:18.6px;background:#545454;border-radius:0 0 4px 0;"></div>
<svg style="left:1851.6px;top:417.3px;" width="10" height="10" viewBox="0 0 10 10"><path d="M1 1 L9 9 M9 1 L1 9" stroke="#e6e6e6" stroke-width="1.3" fill="none" stroke-linecap="round"/></svg>
<div style="left:1876.2px;top:294.5px;width:17.8px;height:17.0px;background:#282828;border-radius:4px;"></div>
<svg style="left:1879.0px;top:297.3px;" width="12" height="12" viewBox="0 0 12 12"><path d="M2.4 4.2 L6 7.8 L9.6 4.2" fill="none" stroke="#e6e6e6" stroke-width="1.25" stroke-linecap="round" stroke-linejoin="round"/></svg>
<div style="left:1876.2px;top:315.8px;width:17.8px;height:19.2px;background:#545454;border-radius:4px;"></div>
<svg style="left:1878.7px;top:319.0px;" width="13" height="13" viewBox="0 0 13 13"><rect x="0.6" y="0.6" width="11.8" height="11.8" fill="none" stroke="#e6e6e6" stroke-width="1.2"/><path d="M1.5 11.5 L5 5 L8.5 11.5Z" fill="#e6e6e6"/><circle cx="9.3" cy="3.6" r="1.4" fill="#e6e6e6"/></svg>
<div style="left:1615.0px;top:443.6px;width:285.0px;height:333.2px;background:#3d3d3d;border-radius:4px;"></div>
<svg style="left:1621.3px;top:450.6px;" width="12" height="12" viewBox="0 0 12 12"><path d="M2.4 4.2 L6 7.8 L9.6 4.2" fill="none" stroke="#c8c8c8" stroke-width="1.25" stroke-linecap="round" stroke-linejoin="round"/></svg>
<span class="t" style="left:1636.8px;top:447.93px;font-size:11.5px;letter-spacing:0.03px;color:#e6e6e6;">Brush Settings</span><svg style="left:1885.0px;top:453.0px;" width="11" height="5" viewBox="0 0 11 5"><rect x="0.6" y="0.4" width="1.2" height="1.2" fill="#9a9a9a"/><rect x="0.6" y="2.9" width="1.2" height="1.2" fill="#9a9a9a"/><rect x="3.1" y="0.4" width="1.2" height="1.2" fill="#9a9a9a"/><rect x="3.1" y="2.9" width="1.2" height="1.2" fill="#9a9a9a"/><rect x="5.6" y="0.4" width="1.2" height="1.2" fill="#9a9a9a"/><rect x="5.6" y="2.9" width="1.2" height="1.2" fill="#9a9a9a"/><rect x="8.1" y="0.4" width="1.2" height="1.2" fill="#9a9a9a"/><rect x="8.1" y="2.9" width="1.2" height="1.2" fill="#9a9a9a"/><rect x="10.6" y="0.4" width="1.2" height="1.2" fill="#9a9a9a"/><rect x="10.6" y="2.9" width="1.2" height="1.2" fill="#9a9a9a"/></svg>
<span class="t" style="left:1691.8px;top:478.23px;font-size:11.5px;letter-spacing:-0.32px;color:#e6e6e6;">Radius</span><div style="left:1737.0px;top:477.5px;width:116.7px;height:17.7px;background:#545454;border-radius:4px 0 0 4px;overflow:hidden;"><div style="left:0.0px;top:0.0px;width:17.8px;height:18.0px;background:#4772b3;"></div>
</div><span class="t" style="left:1779.5px;top:478.23px;font-size:11.5px;letter-spacing:0.47px;color:#e6e6e6;">87 px</span><div style="left:1854.4px;top:477.5px;width:19.6px;height:17.7px;background:#545454;border-radius:0px;"></div>
<svg style="left:1856.4px;top:478.5px;" width="16" height="16" viewBox="0 0 16 16"><g fill="none" stroke="#d8d8d8" stroke-width="1.1" stroke-linecap="round"><path d="M4.79 5.9 A5 5 0 1 0 10.83 13.1"/><path d="M5.61 8.16 A2.6 2.6 0 1 0 8.75 11.9"/></g><path d="M6.6 10.4 L7.3 7.4 L13.6 1.1 L15.9 3.4 L9.6 9.7 Z" fill="#d8d8d8"/></svg>
<div style="left:1874.7px;top:477.5px;width:19.3px;height:17.7px;background:#4772b3;border-radius:0 4px 4px 0;"></div>
<svg style="left:1877.5px;top:479.3px;" width="14" height="15" viewBox="0 0 14 15"><path d="M1 1 H7 V3 H5 V13 H3 V3 H1Z" fill="#fff"/><path d="M1 1 V3.5 M7 1 V3.5" stroke="#fff" stroke-width="1.4"/><path d="M11 1 V9" stroke="#fff" stroke-width="1.6"/><path d="M9.2 10 Q11 9 12.8 10 V13 Q11 14.2 9.2 13Z" fill="#fff"/></svg>
<span class="t" style="left:1667.7px;top:500.13px;font-size:11.5px;letter-spacing:-0.11px;color:#e6e6e6;">Radius Unit</span><div style="left:1737.0px;top:499.3px;width:77.2px;height:17.9px;background:#4772b3;border-radius:4px 0 0 4px;"></div>
<span class="t" style="left:1762.8px;top:500.13px;font-size:11.5px;letter-spacing:-0.17px;color:#fff;">View</span><div style="left:1814.9px;top:499.3px;width:79.1px;height:17.9px;background:#545454;border-radius:0 4px 4px 0;"></div>
<span class="t" style="left:1838.5px;top:500.13px;font-size:11.5px;letter-spacing:-0.40px;color:#e6e6e6;">Scene</span><span class="t" style="left:1681.7px;top:529.93px;font-size:11.5px;letter-spacing:0.12px;color:#e6e6e6;">Strength</span><div style="left:1737.0px;top:529.0px;width:116.7px;height:17.8px;background:#545454;border-radius:4px 0 0 4px;overflow:hidden;"><div style="left:0.0px;top:0.0px;width:56.8px;height:18.0px;background:#4772b3;"></div>
</div><span class="t" style="left:1779.0px;top:529.93px;font-size:11.5px;letter-spacing:0.35px;color:#e6e6e6;">0.500</span><div style="left:1854.4px;top:529.0px;width:19.6px;height:17.8px;background:#4772b3;border-radius:0px;"></div>
<svg style="left:1856.4px;top:530.0px;" width="16" height="16" viewBox="0 0 16 16"><g fill="none" stroke="#fff" stroke-width="1.1" stroke-linecap="round"><path d="M4.79 5.9 A5 5 0 1 0 10.83 13.1"/><path d="M5.61 8.16 A2.6 2.6 0 1 0 8.75 11.9"/></g><path d="M6.6 10.4 L7.3 7.4 L13.6 1.1 L15.9 3.4 L9.6 9.7 Z" fill="#fff"/></svg>
<div style="left:1874.7px;top:529.0px;width:19.3px;height:17.8px;background:#545454;border-radius:0 4px 4px 0;"></div>
<svg style="left:1877.5px;top:530.8px;" width="14" height="15" viewBox="0 0 14 15"><path d="M1 1 H7 V3 H5 V13 H3 V3 H1Z" fill="#e6e6e6"/><path d="M1 1 V3.5 M7 1 V3.5" stroke="#e6e6e6" stroke-width="1.4"/><path d="M11 1 V9" stroke="#e6e6e6" stroke-width="1.6"/><path d="M9.2 10 Q11 9 12.8 10 V13 Q11 14.2 9.2 13Z" fill="#e6e6e6"/></svg>
<span class="t" style="left:1679.7px;top:559.93px;font-size:11.5px;letter-spacing:0.12px;color:#e6e6e6;">Direction</span><div style="left:1737.0px;top:559.2px;width:77.2px;height:17.8px;background:#4772b3;border-radius:4px 0 0 4px;"></div>
<svg style="left:1743.5px;top:563.2px;" width="10" height="10" viewBox="0 0 10 10"><path d="M5 0.5V9.5M0.5 5H9.5" stroke="#fff" stroke-width="1.1" fill="none"/></svg>
<span class="t" style="left:1773.8px;top:559.93px;font-size:11.5px;letter-spacing:-0.23px;color:#fff;">Add</span><div style="left:1814.9px;top:559.2px;width:79.1px;height:17.8px;background:#545454;border-radius:0 4px 4px 0;"></div>
<svg style="left:1821.5px;top:563.2px;" width="10" height="10" viewBox="0 0 10 10"><path d="M0.8 5H9.2" stroke="#d0d0d0" stroke-width="1.1" fill="none"/></svg>
<span class="t" style="left:1840.8px;top:559.93px;font-size:11.5px;letter-spacing:0.08px;color:#e6e6e6;">Subtract</span><span class="t" style="left:1650.8px;top:582.13px;font-size:11.5px;letter-spacing:-0.07px;color:#e6e6e6;">Normal Radius</span><div style="left:1737.0px;top:581.5px;width:157.0px;height:17.7px;background:#545454;border-radius:4px;overflow:hidden;"><div style="left:0.0px;top:0.0px;width:37.0px;height:18.0px;background:#4772b3;"></div>
</div><span class="t" style="left:1799.0px;top:582.13px;font-size:11.5px;letter-spacing:0.35px;color:#e6e6e6;">0.500</span><span class="t" style="left:1677.9px;top:604.13px;font-size:11.5px;letter-spacing:-0.16px;color:#e6e6e6;">Hardness</span><div style="left:1737.0px;top:603.4px;width:116.7px;height:17.8px;background:#545454;border-radius:4px 0 0 4px;"></div>
<span class="t" style="left:1779.0px;top:604.13px;font-size:11.5px;letter-spacing:0.35px;color:#e6e6e6;">0.000</span><div style="left:1854.4px;top:603.4px;width:19.6px;height:17.8px;background:#545454;border-radius:0px;"></div>
<svg style="left:1857.2px;top:607.3px;" width="14" height="10" viewBox="0 0 14 10"><path d="M1 5 H13 M4 2 L1 5 L4 8 M10 2 L13 5 L10 8" fill="none" stroke="#e6e6e6" stroke-width="1.1"/></svg>
<div style="left:1874.7px;top:603.4px;width:19.3px;height:17.8px;background:#545454;border-radius:0 4px 4px 0;"></div>
<svg style="left:1876.5px;top:604.5px;" width="16" height="16" viewBox="0 0 16 16"><g fill="none" stroke="#d8d8d8" stroke-width="1.1" stroke-linecap="round"><path d="M4.79 5.9 A5 5 0 1 0 10.83 13.1"/><path d="M5.61 8.16 A2.6 2.6 0 1 0 8.75 11.9"/></g><path d="M6.6 10.4 L7.3 7.4 L13.6 1.1 L15.9 3.4 L9.6 9.7 Z" fill="#d8d8d8"/></svg>
<span class="t" style="left:1655.9px;top:626.13px;font-size:11.5px;letter-spacing:0.30px;color:#e6e6e6;">Auto-Smooth</span><div style="left:1737.0px;top:625.5px;width:137.0px;height:17.8px;background:#545454;border-radius:4px 0 0 4px;"></div>
<span class="t" style="left:1789.0px;top:626.13px;font-size:11.5px;letter-spacing:0.35px;color:#e6e6e6;">0.000</span><div style="left:1874.7px;top:625.5px;width:19.3px;height:17.8px;background:#545454;border-radius:0 4px 4px 0;"></div>
<svg style="left:1876.5px;top:626.6px;" width="16" height="16" viewBox="0 0 16 16"><g fill="none" stroke="#d8d8d8" stroke-width="1.1" stroke-linecap="round"><path d="M4.79 5.9 A5 5 0 1 0 10.83 13.1"/><path d="M5.61 8.16 A2.6 2.6 0 1 0 8.75 11.9"/></g><path d="M6.6 10.4 L7.3 7.4 L13.6 1.1 L15.9 3.4 L9.6 9.7 Z" fill="#d8d8d8"/></svg>
<svg style="left:1636.8px;top:659.3px;" width="12" height="12" viewBox="0 0 12 12"><path d="M4.2 2.4 L7.8 6 L4.2 9.6" fill="none" stroke="#c8c8c8" stroke-width="1.3" stroke-linecap="round" stroke-linejoin="round"/></svg>
<span class="t" style="left:1651.0px;top:657.23px;font-size:11.5px;letter-spacing:-0.14px;color:#e6e6e6;">Advanced</span><svg style="left:1636.8px;top:684.3px;" width="12" height="12" viewBox="0 0 12 12"><path d="M4.2 2.4 L7.8 6 L4.2 9.6" fill="none" stroke="#c8c8c8" stroke-width="1.3" stroke-linecap="round" stroke-linejoin="round"/></svg>
<span class="t" style="left:1651.0px;top:682.23px;font-size:11.5px;letter-spacing:0.13px;color:#e6e6e6;">Texture</span><svg style="left:1636.8px;top:709.4px;" width="12" height="12" viewBox="0 0 12 12"><path d="M4.2 2.4 L7.8 6 L4.2 9.6" fill="none" stroke="#c8c8c8" stroke-width="1.3" stroke-linecap="round" stroke-linejoin="round"/></svg>
<span class="t" style="left:1651.0px;top:707.33px;font-size:11.5px;letter-spacing:0.09px;color:#e6e6e6;">Stroke</span><svg style="left:1636.8px;top:734.3px;" width="12" height="12" viewBox="0 0 12 12"><path d="M4.2 2.4 L7.8 6 L4.2 9.6" fill="none" stroke="#c8c8c8" stroke-width="1.3" stroke-linecap="round" stroke-linejoin="round"/></svg>
<span class="t" style="left:1651.0px;top:732.23px;font-size:11.5px;letter-spacing:0.23px;color:#e6e6e6;">Falloff</span><svg style="left:1636.8px;top:759.3px;" width="12" height="12" viewBox="0 0 12 12"><path d="M4.2 2.4 L7.8 6 L4.2 9.6" fill="none" stroke="#c8c8c8" stroke-width="1.3" stroke-linecap="round" stroke-linejoin="round"/></svg>
<div style="left:1650.0px;top:759.5px;width:11.7px;height:11.7px;background:#4772b3;border-radius:2.5px;"></div>
<svg style="left:1650.8px;top:760.3px;" width="10" height="10" viewBox="0 0 10 10"><path d="M1.8 5.3 L4.2 7.8 L8.3 2.4" fill="none" stroke="#fff" stroke-width="1.6"/></svg>
<span class="t" style="left:1665.7px;top:757.13px;font-size:11.5px;letter-spacing:0.02px;color:#e6e6e6;">Cursor</span><div style="left:1615.0px;top:779.5px;width:285.0px;height:24.9px;background:#3d3d3d;border-radius:4px;"></div>
<svg style="left:1622.0px;top:786.0px;" width="12" height="12" viewBox="0 0 12 12"><path d="M4.2 2.4 L7.8 6 L4.2 9.6" fill="none" stroke="#c8c8c8" stroke-width="1.3" stroke-linecap="round" stroke-linejoin="round"/></svg>
<span class="t" style="left:1656.5px;top:783.68px;font-size:11.5px;letter-spacing:0.24px;color:#e6e6e6;">Dyntopo</span><svg style="left:1885.0px;top:788.8px;" width="11" height="5" viewBox="0 0 11 5"><rect x="0.6" y="0.4" width="1.2" height="1.2" fill="#9a9a9a"/><rect x="0.6" y="2.9" width="1.2" height="1.2" fill="#9a9a9a"/><rect x="3.1" y="0.4" width="1.2" height="1.2" fill="#9a9a9a"/><rect x="3.1" y="2.9" width="1.2" height="1.2" fill="#9a9a9a"/><rect x="5.6" y="0.4" width="1.2" height="1.2" fill="#9a9a9a"/><rect x="5.6" y="2.9" width="1.2" height="1.2" fill="#9a9a9a"/><rect x="8.1" y="0.4" width="1.2" height="1.2" fill="#9a9a9a"/><rect x="8.1" y="2.9" width="1.2" height="1.2" fill="#9a9a9a"/><rect x="10.6" y="0.4" width="1.2" height="1.2" fill="#9a9a9a"/><rect x="10.6" y="2.9" width="1.2" height="1.2" fill="#9a9a9a"/></svg>
<div style="left:1615.0px;top:806.7px;width:285.0px;height:24.5px;background:#3d3d3d;border-radius:4px;"></div>
<svg style="left:1622.0px;top:813.0px;" width="12" height="12" viewBox="0 0 12 12"><path d="M4.2 2.4 L7.8 6 L4.2 9.6" fill="none" stroke="#c8c8c8" stroke-width="1.3" stroke-linecap="round" stroke-linejoin="round"/></svg>
<span class="t" style="left:1636.8px;top:810.68px;font-size:11.5px;letter-spacing:-0.36px;color:#e6e6e6;">Remesh</span><svg style="left:1885.0px;top:815.8px;" width="11" height="5" viewBox="0 0 11 5"><rect x="0.6" y="0.4" width="1.2" height="1.2" fill="#9a9a9a"/><rect x="0.6" y="2.9" width="1.2" height="1.2" fill="#9a9a9a"/><rect x="3.1" y="0.4" width="1.2" height="1.2" fill="#9a9a9a"/><rect x="3.1" y="2.9" width="1.2" height="1.2" fill="#9a9a9a"/><rect x="5.6" y="0.4" width="1.2" height="1.2" fill="#9a9a9a"/><rect x="5.6" y="2.9" width="1.2" height="1.2" fill="#9a9a9a"/><rect x="8.1" y="0.4" width="1.2" height="1.2" fill="#9a9a9a"/><rect x="8.1" y="2.9" width="1.2" height="1.2" fill="#9a9a9a"/><rect x="10.6" y="0.4" width="1.2" height="1.2" fill="#9a9a9a"/><rect x="10.6" y="2.9" width="1.2" height="1.2" fill="#9a9a9a"/></svg>
<div style="left:1615.0px;top:833.3px;width:285.0px;height:24.5px;background:#3d3d3d;border-radius:4px;"></div>
<svg style="left:1622.0px;top:839.5px;" width="12" height="12" viewBox="0 0 12 12"><path d="M4.2 2.4 L7.8 6 L4.2 9.6" fill="none" stroke="#c8c8c8" stroke-width="1.3" stroke-linecap="round" stroke-linejoin="round"/></svg>
<span class="t" style="left:1636.8px;top:837.28px;font-size:11.5px;letter-spacing:0.14px;color:#e6e6e6;">Symmetry</span><svg style="left:1885.0px;top:842.3px;" width="11" height="5" viewBox="0 0 11 5"><rect x="0.6" y="0.4" width="1.2" height="1.2" fill="#9a9a9a"/><rect x="0.6" y="2.9" width="1.2" height="1.2" fill="#9a9a9a"/><rect x="3.1" y="0.4" width="1.2" height="1.2" fill="#9a9a9a"/><rect x="3.1" y="2.9" width="1.2" height="1.2" fill="#9a9a9a"/><rect x="5.6" y="0.4" width="1.2" height="1.2" fill="#9a9a9a"/><rect x="5.6" y="2.9" width="1.2" height="1.2" fill="#9a9a9a"/><rect x="8.1" y="0.4" width="1.2" height="1.2" fill="#9a9a9a"/><rect x="8.1" y="2.9" width="1.2" height="1.2" fill="#9a9a9a"/><rect x="10.6" y="0.4" width="1.2" height="1.2" fill="#9a9a9a"/><rect x="10.6" y="2.9" width="1.2" height="1.2" fill="#9a9a9a"/></svg>
<div style="left:1615.0px;top:860.4px;width:285.0px;height:24.6px;background:#3d3d3d;border-radius:4px;"></div>
<svg style="left:1622.0px;top:866.7px;" width="12" height="12" viewBox="0 0 12 12"><path d="M4.2 2.4 L7.8 6 L4.2 9.6" fill="none" stroke="#c8c8c8" stroke-width="1.3" stroke-linecap="round" stroke-linejoin="round"/></svg>
<span class="t" style="left:1636.8px;top:864.43px;font-size:11.5px;letter-spacing:0.09px;color:#e6e6e6;">Options</span><svg style="left:1885.0px;top:869.5px;" width="11" height="5" viewBox="0 0 11 5"><rect x="0.6" y="0.4" width="1.2" height="1.2" fill="#9a9a9a"/><rect x="0.6" y="2.9" width="1.2" height="1.2" fill="#9a9a9a"/><rect x="3.1" y="0.4" width="1.2" height="1.2" fill="#9a9a9a"/><rect x="3.1" y="2.9" width="1.2" height="1.2" fill="#9a9a9a"/><rect x="5.6" y="0.4" width="1.2" height="1.2" fill="#9a9a9a"/><rect x="5.6" y="2.9" width="1.2" height="1.2" fill="#9a9a9a"/><rect x="8.1" y="0.4" width="1.2" height="1.2" fill="#9a9a9a"/><rect x="8.1" y="2.9" width="1.2" height="1.2" fill="#9a9a9a"/><rect x="10.6" y="0.4" width="1.2" height="1.2" fill="#9a9a9a"/><rect x="10.6" y="2.9" width="1.2" height="1.2" fill="#9a9a9a"/></svg>
<div style="left:1615.0px;top:887.4px;width:285.0px;height:24.6px;background:#3d3d3d;border-radius:4px;"></div>
<svg style="left:1622.0px;top:893.7px;" width="12" height="12" viewBox="0 0 12 12"><path d="M4.2 2.4 L7.8 6 L4.2 9.6" fill="none" stroke="#c8c8c8" stroke-width="1.3" stroke-linecap="round" stroke-linejoin="round"/></svg>
<span class="t" style="left:1636.8px;top:891.43px;font-size:11.5px;letter-spacing:0.09px;color:#e6e6e6;">Workspace</span><svg style="left:1885.0px;top:896.5px;" width="11" height="5" viewBox="0 0 11 5"><rect x="0.6" y="0.4" width="1.2" height="1.2" fill="#9a9a9a"/><rect x="0.6" y="2.9" width="1.2" height="1.2" fill="#9a9a9a"/><rect x="3.1" y="0.4" width="1.2" height="1.2" fill="#9a9a9a"/><rect x="3.1" y="2.9" width="1.2" height="1.2" fill="#9a9a9a"/><rect x="5.6" y="0.4" width="1.2" height="1.2" fill="#9a9a9a"/><rect x="5.6" y="2.9" width="1.2" height="1.2" fill="#9a9a9a"/><rect x="8.1" y="0.4" width="1.2" height="1.2" fill="#9a9a9a"/><rect x="8.1" y="2.9" width="1.2" height="1.2" fill="#9a9a9a"/><rect x="10.6" y="0.4" width="1.2" height="1.2" fill="#9a9a9a"/><rect x="10.6" y="2.9" width="1.2" height="1.2" fill="#9a9a9a"/></svg>
<div style="left:1640.0px;top:786.7px;width:10.3px;height:10.3px;background:transparent;border-radius:1.5px;border:1px solid #b0b0b0;"></div>
</body></html>
